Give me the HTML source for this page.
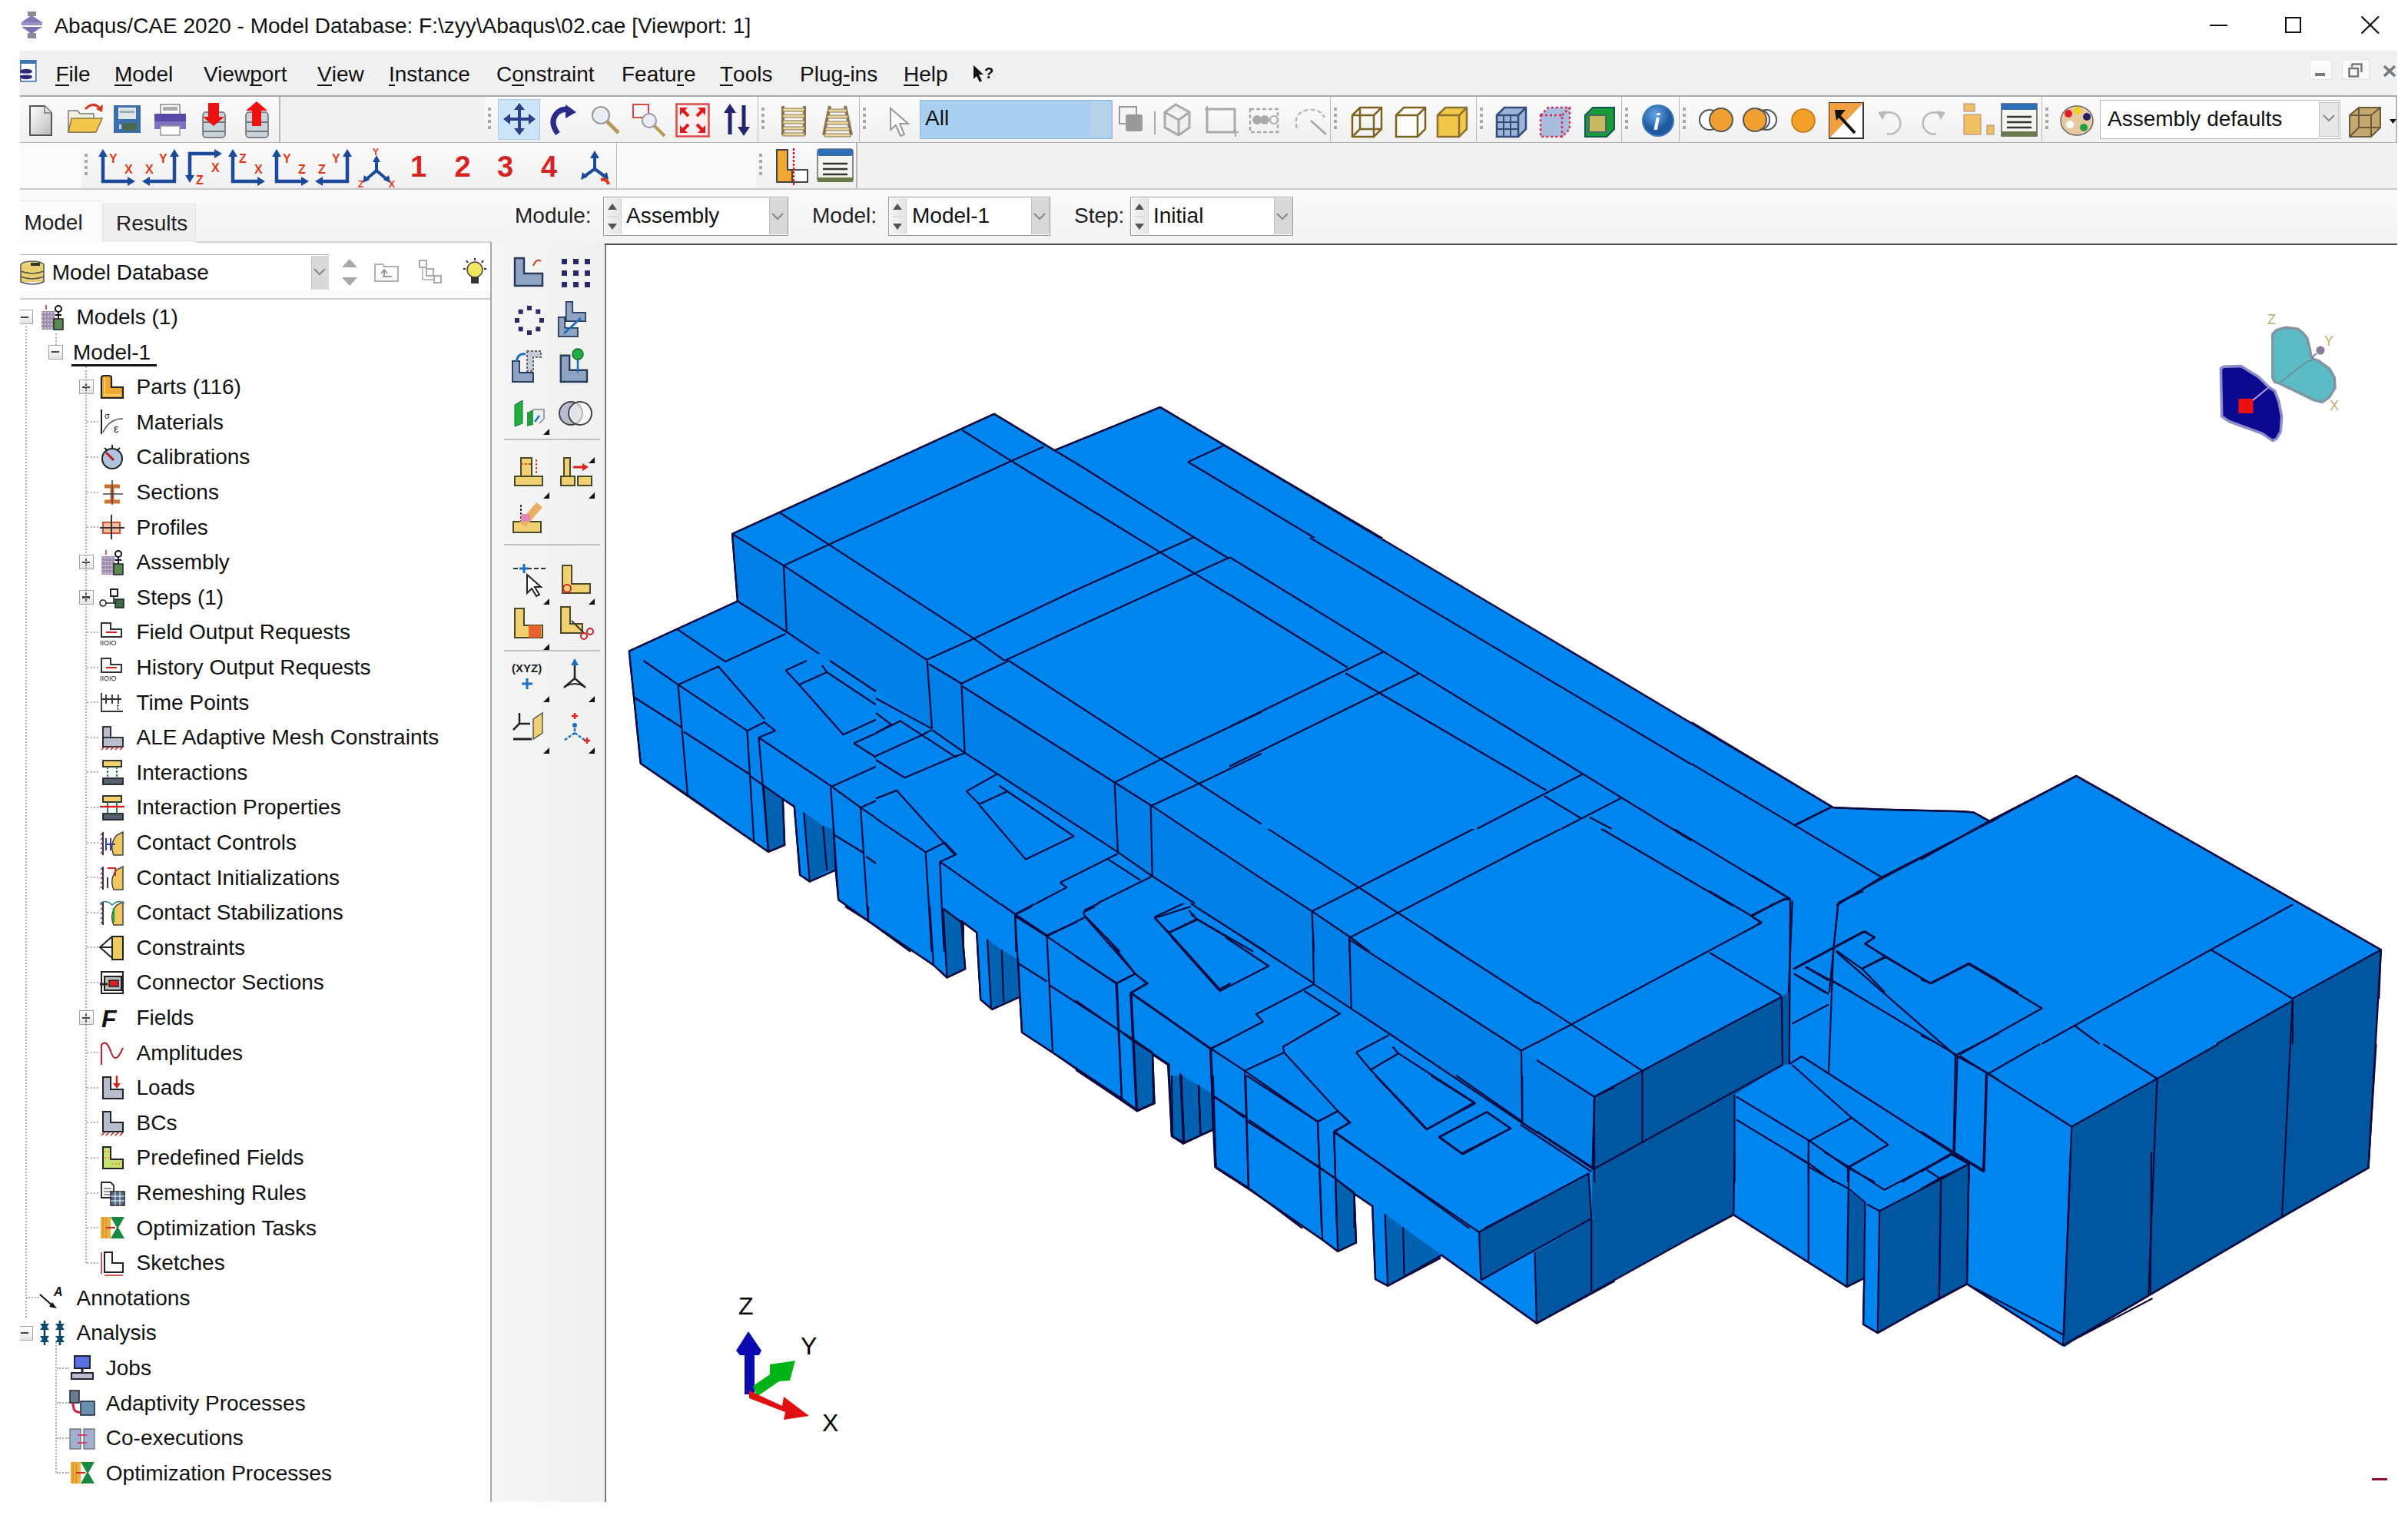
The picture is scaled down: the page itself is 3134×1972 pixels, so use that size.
<!DOCTYPE html>
<html><head><meta charset="utf-8"><title>Abaqus/CAE</title>
<style>
html,body{margin:0;padding:0;background:#fff;}
body{width:3134px;height:1972px;position:relative;overflow:hidden;font-family:"Liberation Sans", sans-serif;}
.t{position:absolute;white-space:nowrap;font-family:"Liberation Sans", sans-serif;}
u{text-decoration:none;border-bottom:2px solid currentColor;display:inline-block;line-height:26px;}
svg text{font-family:"Liberation Sans", sans-serif;}
</style></head><body>
<div class="t" style="left:70.4px;top:19.6px;font-size:28px;line-height:28px;color:#111;font-weight:normal;">Abaqus/CAE 2020 - Model Database: F:\zyy\Abaqus\02.cae [Viewport: 1]</div>
<svg style="position:absolute;left:26px;top:15px;overflow:visible" width="31" height="35" viewBox="0 0 31 35"><rect x="10" y="0" width="11" height="6" fill="#8a8a9a"/>
<polygon points="2,14 15,5 29,14" fill="#8878b8"/><rect x="2" y="14" width="27" height="4" fill="#9a90c8"/>
<polygon points="2,20 29,20 15,29" fill="#7f70b0"/><rect x="10" y="28" width="11" height="7" fill="#8a8a9a"/></svg>
<div style="position:absolute;left:2876px;top:32px;width:23px;height:2px;background:#111"></div>
<div style="position:absolute;left:2974px;top:22px;width:21px;height:21px;border:2px solid #111;box-sizing:border-box"></div>
<svg style="position:absolute;left:3072px;top:20px;overflow:visible" width="26" height="25" viewBox="0 0 26 25"><path d="M1.5 1.5 L24 23.5 M24 1.5 L1.5 23.5" stroke="#111" stroke-width="2.2"/></svg>
<div style="position:absolute;left:26px;top:66px;width:3094px;height:59px;background:#f0f0f0"></div>
<svg style="position:absolute;left:26px;top:78px;overflow:visible" width="22" height="29" viewBox="0 0 22 29"><rect x="0.8" y="0.8" width="20" height="27" fill="#fff" stroke="#3a6fa8" stroke-width="1.6"/>
<rect x="0" y="0" width="21" height="5" fill="#3f74b8"/>
<ellipse cx="8" cy="15" rx="8" ry="3.2" fill="#2e2a7a"/><ellipse cx="8" cy="22" rx="8" ry="3.2" fill="#2e2a7a"/>
<rect x="0" y="17.6" width="16" height="2" fill="#fff"/></svg>
<div class="t" style="left:72.4px;top:82.8px;font-size:28px;line-height:28px;color:#111;font-weight:normal;"><u>F</u>ile</div>
<div class="t" style="left:149px;top:82.8px;font-size:28px;line-height:28px;color:#111;font-weight:normal;"><u>M</u>odel</div>
<div class="t" style="left:265px;top:82.8px;font-size:28px;line-height:28px;color:#111;font-weight:normal;">View<u>p</u>ort</div>
<div class="t" style="left:413px;top:82.8px;font-size:28px;line-height:28px;color:#111;font-weight:normal;"><u>V</u>iew</div>
<div class="t" style="left:506px;top:82.8px;font-size:28px;line-height:28px;color:#111;font-weight:normal;"><u>I</u>nstance</div>
<div class="t" style="left:646px;top:82.8px;font-size:28px;line-height:28px;color:#111;font-weight:normal;">C<u>o</u>nstraint</div>
<div class="t" style="left:809px;top:82.8px;font-size:28px;line-height:28px;color:#111;font-weight:normal;">Featu<u>r</u>e</div>
<div class="t" style="left:937px;top:82.8px;font-size:28px;line-height:28px;color:#111;font-weight:normal;"><u>T</u>ools</div>
<div class="t" style="left:1041px;top:82.8px;font-size:28px;line-height:28px;color:#111;font-weight:normal;">Plug<u>-</u>ins</div>
<div class="t" style="left:1176px;top:82.8px;font-size:28px;line-height:28px;color:#111;font-weight:normal;"><u>H</u>elp</div>
<svg style="position:absolute;left:1266px;top:84px;overflow:visible" width="28" height="24" viewBox="0 0 28 24"><polygon points="1,1 1,19 5,15 9,23 12,21 8,13 14,13" fill="#111"/>
<text x="15" y="18" font-family="Liberation Sans" font-weight="bold" font-size="20" fill="#111">?</text></svg>
<div style="position:absolute;left:3006px;top:77px;width:29px;height:27px;background:#fbfbfb;border:1px solid #e4e4e4;box-sizing:border-box"></div>
<div style="position:absolute;left:3013px;top:95px;width:13px;height:4px;background:#777"></div>
<div style="position:absolute;left:3048px;top:77px;width:36px;height:27px;background:#fbfbfb;border:1px solid #e4e4e4;box-sizing:border-box"></div>
<svg style="position:absolute;left:3056px;top:82px;overflow:visible" width="19" height="19" viewBox="0 0 19 19"><path d="M5 1.5 H17.5 V12 M1.5 7 H13 V17.5 H1.5 Z M5 1.5 V5" stroke="#777" stroke-width="2.5" fill="none"/></svg>
<svg style="position:absolute;left:3101px;top:84px;overflow:visible" width="18" height="17" viewBox="0 0 18 17"><path d="M2 2 L16 15 M16 2 L2 15" stroke="#707880" stroke-width="3.5"/></svg>
<div style="position:absolute;left:26px;top:125px;width:3094px;height:121px;background:#f1f1f1"></div>
<div style="position:absolute;left:26px;top:124px;width:3094px;height:2px;background:#a9a9a9"></div>
<div style="position:absolute;left:26px;top:185px;width:3094px;height:1px;background:#b4b4b4"></div>
<div style="position:absolute;left:26px;top:246px;width:3094px;height:71px;background:linear-gradient(#fafafa,#f3f3f3)"></div>
<div style="position:absolute;left:26px;top:245px;width:3094px;height:1.5px;background:#c8c8c8"></div>
<div style="position:absolute;left:26px;top:126px;width:338px;height:59px;background:linear-gradient(#fbfbfb,#f0f0f0)"></div>
<div style="position:absolute;left:363px;top:126px;width:2px;height:59px;background:#b9b9b9"></div>
<div style="position:absolute;left:631px;top:126px;width:356px;height:59px;background:linear-gradient(#fbfbfb,#f0f0f0)"></div>
<div style="position:absolute;left:986px;top:126px;width:2px;height:59px;background:#b9b9b9"></div>
<div style="position:absolute;left:635px;top:140px;width:4px;height:4px;background:#a8a8a8"></div>
<div style="position:absolute;left:635px;top:148px;width:4px;height:4px;background:#a8a8a8"></div>
<div style="position:absolute;left:635px;top:156px;width:4px;height:4px;background:#a8a8a8"></div>
<div style="position:absolute;left:635px;top:164px;width:4px;height:4px;background:#a8a8a8"></div>
<div style="position:absolute;left:987px;top:126px;width:132px;height:59px;background:linear-gradient(#fbfbfb,#f0f0f0)"></div>
<div style="position:absolute;left:1118px;top:126px;width:2px;height:59px;background:#b9b9b9"></div>
<div style="position:absolute;left:991px;top:140px;width:4px;height:4px;background:#a8a8a8"></div>
<div style="position:absolute;left:991px;top:148px;width:4px;height:4px;background:#a8a8a8"></div>
<div style="position:absolute;left:991px;top:156px;width:4px;height:4px;background:#a8a8a8"></div>
<div style="position:absolute;left:991px;top:164px;width:4px;height:4px;background:#a8a8a8"></div>
<div style="position:absolute;left:1119px;top:126px;width:613px;height:59px;background:linear-gradient(#fbfbfb,#f0f0f0)"></div>
<div style="position:absolute;left:1731px;top:126px;width:2px;height:59px;background:#b9b9b9"></div>
<div style="position:absolute;left:1123px;top:140px;width:4px;height:4px;background:#a8a8a8"></div>
<div style="position:absolute;left:1123px;top:148px;width:4px;height:4px;background:#a8a8a8"></div>
<div style="position:absolute;left:1123px;top:156px;width:4px;height:4px;background:#a8a8a8"></div>
<div style="position:absolute;left:1123px;top:164px;width:4px;height:4px;background:#a8a8a8"></div>
<div style="position:absolute;left:1732px;top:126px;width:190px;height:59px;background:linear-gradient(#fbfbfb,#f0f0f0)"></div>
<div style="position:absolute;left:1921px;top:126px;width:2px;height:59px;background:#b9b9b9"></div>
<div style="position:absolute;left:1736px;top:140px;width:4px;height:4px;background:#a8a8a8"></div>
<div style="position:absolute;left:1736px;top:148px;width:4px;height:4px;background:#a8a8a8"></div>
<div style="position:absolute;left:1736px;top:156px;width:4px;height:4px;background:#a8a8a8"></div>
<div style="position:absolute;left:1736px;top:164px;width:4px;height:4px;background:#a8a8a8"></div>
<div style="position:absolute;left:1922px;top:126px;width:189px;height:59px;background:linear-gradient(#fbfbfb,#f0f0f0)"></div>
<div style="position:absolute;left:2110px;top:126px;width:2px;height:59px;background:#b9b9b9"></div>
<div style="position:absolute;left:1926px;top:140px;width:4px;height:4px;background:#a8a8a8"></div>
<div style="position:absolute;left:1926px;top:148px;width:4px;height:4px;background:#a8a8a8"></div>
<div style="position:absolute;left:1926px;top:156px;width:4px;height:4px;background:#a8a8a8"></div>
<div style="position:absolute;left:1926px;top:164px;width:4px;height:4px;background:#a8a8a8"></div>
<div style="position:absolute;left:2111px;top:126px;width:75px;height:59px;background:linear-gradient(#fbfbfb,#f0f0f0)"></div>
<div style="position:absolute;left:2185px;top:126px;width:2px;height:59px;background:#b9b9b9"></div>
<div style="position:absolute;left:2115px;top:140px;width:4px;height:4px;background:#a8a8a8"></div>
<div style="position:absolute;left:2115px;top:148px;width:4px;height:4px;background:#a8a8a8"></div>
<div style="position:absolute;left:2115px;top:156px;width:4px;height:4px;background:#a8a8a8"></div>
<div style="position:absolute;left:2115px;top:164px;width:4px;height:4px;background:#a8a8a8"></div>
<div style="position:absolute;left:2186px;top:126px;width:472px;height:59px;background:linear-gradient(#fbfbfb,#f0f0f0)"></div>
<div style="position:absolute;left:2657px;top:126px;width:2px;height:59px;background:#b9b9b9"></div>
<div style="position:absolute;left:2190px;top:140px;width:4px;height:4px;background:#a8a8a8"></div>
<div style="position:absolute;left:2190px;top:148px;width:4px;height:4px;background:#a8a8a8"></div>
<div style="position:absolute;left:2190px;top:156px;width:4px;height:4px;background:#a8a8a8"></div>
<div style="position:absolute;left:2190px;top:164px;width:4px;height:4px;background:#a8a8a8"></div>
<div style="position:absolute;left:2658px;top:126px;width:461px;height:59px;background:linear-gradient(#fbfbfb,#f0f0f0)"></div>
<div style="position:absolute;left:3118px;top:126px;width:2px;height:59px;background:#b9b9b9"></div>
<div style="position:absolute;left:2662px;top:140px;width:4px;height:4px;background:#a8a8a8"></div>
<div style="position:absolute;left:2662px;top:148px;width:4px;height:4px;background:#a8a8a8"></div>
<div style="position:absolute;left:2662px;top:156px;width:4px;height:4px;background:#a8a8a8"></div>
<div style="position:absolute;left:2662px;top:164px;width:4px;height:4px;background:#a8a8a8"></div>
<div style="position:absolute;left:26px;top:186px;width:80px;height:59px;background:#fbfbfb"></div>
<div style="position:absolute;left:106px;top:186px;width:697px;height:59px;background:linear-gradient(#fbfbfb,#f0f0f0)"></div>
<div style="position:absolute;left:802px;top:186px;width:2px;height:59px;background:#b9b9b9"></div>
<div style="position:absolute;left:110px;top:200px;width:4px;height:4px;background:#a8a8a8"></div>
<div style="position:absolute;left:110px;top:208px;width:4px;height:4px;background:#a8a8a8"></div>
<div style="position:absolute;left:110px;top:216px;width:4px;height:4px;background:#a8a8a8"></div>
<div style="position:absolute;left:110px;top:224px;width:4px;height:4px;background:#a8a8a8"></div>
<div style="position:absolute;left:984px;top:186px;width:131px;height:59px;background:linear-gradient(#fbfbfb,#f0f0f0)"></div>
<div style="position:absolute;left:1114px;top:186px;width:2px;height:59px;background:#b9b9b9"></div>
<div style="position:absolute;left:988px;top:200px;width:4px;height:4px;background:#a8a8a8"></div>
<div style="position:absolute;left:988px;top:208px;width:4px;height:4px;background:#a8a8a8"></div>
<div style="position:absolute;left:988px;top:216px;width:4px;height:4px;background:#a8a8a8"></div>
<div style="position:absolute;left:988px;top:224px;width:4px;height:4px;background:#a8a8a8"></div>
<div style="position:absolute;left:803px;top:186px;width:181px;height:59px;background:#fafafa"></div>
<svg style="position:absolute;left:37px;top:136px;overflow:visible" width="32" height="42" viewBox="0 0 32 42"><path d="M2 2 H21 L30 11 V40 H2 Z" fill="url(#gdoc)" stroke="#555" stroke-width="2"/><path d="M21 2 V11 H30" fill="#ddd" stroke="#777" stroke-width="1.5"/><defs><linearGradient id="gdoc" x1="0" y1="0" x2="1" y2="1"><stop offset="0" stop-color="#fff"/><stop offset="1" stop-color="#bbb"/></linearGradient></defs></svg>
<svg style="position:absolute;left:87px;top:132px;overflow:visible" width="48" height="42" viewBox="0 0 48 42"><path d="M2 12 H14 L17 16 H35 V40 H2 Z" fill="#f3f0e0" stroke="#777" stroke-width="1.5"/><path d="M6 22 H46 L38 40 H2 Z" fill="#f2c74a" stroke="#8a7a40" stroke-width="1.5"/><path d="M24 10 Q34 0 42 8" stroke="#d23a20" stroke-width="3" fill="none"/><polygon points="38,10 47,4 46,14" fill="#d23a20"/></svg>
<svg style="position:absolute;left:148px;top:137px;overflow:visible" width="35" height="37" viewBox="0 0 35 37"><rect x="0" y="0" width="35" height="36" fill="#3c6fae"/><rect x="6" y="3" width="23" height="15" fill="#dfe6e9"/><rect x="8" y="7" width="19" height="3" fill="#9aa"/><rect x="12" y="23" width="18" height="10" fill="#4a6a50"/><rect x="7" y="25" width="3" height="6" fill="#ccc"/></svg>
<svg style="position:absolute;left:200px;top:135px;overflow:visible" width="43" height="43" viewBox="0 0 43 43"><rect x="9" y="1" width="25" height="13" fill="#fff" stroke="#888" stroke-width="1.5"/><rect x="12" y="4" width="19" height="5" fill="#aaa"/><rect x="1" y="13" width="41" height="20" fill="#5a4aa8"/><rect x="1" y="23" width="41" height="10" fill="#8070c0"/><rect x="9" y="29" width="25" height="12" fill="#fff" stroke="#999" stroke-width="1.5"/></svg>
<svg style="position:absolute;left:263px;top:132px;overflow:visible" width="31" height="48" viewBox="0 0 31 48"><rect x="1" y="14" width="29" height="33" rx="4" fill="#c8d4dc" stroke="#666" stroke-width="1.5"/><rect x="1" y="26" width="29" height="2" fill="#777"/><rect x="1" y="38" width="29" height="2" fill="#777"/><polygon points="8,2 22,2 22,20 29,20 15,32 1,20 8,20" fill="#ee1111"/></svg>
<svg style="position:absolute;left:319px;top:132px;overflow:visible" width="31" height="48" viewBox="0 0 31 48"><rect x="1" y="14" width="29" height="33" rx="4" fill="#c8d4dc" stroke="#666" stroke-width="1.5"/><rect x="1" y="26" width="29" height="2" fill="#777"/><rect x="1" y="38" width="29" height="2" fill="#777"/><polygon points="15,0 29,12 21,12 21,32 9,32 9,12 1,12" fill="#ee1111"/></svg>
<div style="position:absolute;left:648px;top:129px;width:55px;height:53px;background:#cce4f7;border:1px solid #a6cdee;box-sizing:border-box"></div>
<svg style="position:absolute;left:655px;top:134px;overflow:visible" width="42" height="42" viewBox="0 0 42 42"><path d="M21 3 V39 M3 21 H39" stroke="#2a3f88" stroke-width="4"/><polygon points="21,0 14,9 28,9" fill="#2a3f88"/><polygon points="21,42 14,33 28,33" fill="#2a3f88"/><polygon points="0,21 9,14 9,28" fill="#2a3f88"/><polygon points="42,21 33,14 33,28" fill="#2a3f88"/></svg>
<svg style="position:absolute;left:712px;top:136px;overflow:visible" width="38" height="40" viewBox="0 0 38 40"><path d="M14 38 Q2 22 14 10 Q22 4 30 8" stroke="#2a2a88" stroke-width="7" fill="none"/><polygon points="24,0 38,10 24,18" fill="#2a2a88"/></svg>
<svg style="position:absolute;left:768px;top:136px;overflow:visible" width="40" height="40" viewBox="0 0 40 40"><line x1="20" y1="20" x2="37" y2="37" stroke="#b89a5a" stroke-width="5"/><circle cx="14" cy="14" r="11" fill="#e8eef3" stroke="#999" stroke-width="2"/></svg>
<svg style="position:absolute;left:822px;top:134px;overflow:visible" width="46" height="46" viewBox="0 0 46 46"><rect x="2" y="2" width="20" height="17" fill="none" stroke="#dd4444" stroke-width="2"/><line x1="28" y1="28" x2="43" y2="43" stroke="#b89a5a" stroke-width="4"/><circle cx="23" cy="23" r="9" fill="#e8eef3" stroke="#999" stroke-width="2"/></svg>
<svg style="position:absolute;left:879px;top:134px;overflow:visible" width="45" height="45" viewBox="0 0 45 45"><rect x="1.5" y="1.5" width="42" height="42" fill="#fdf0f0" stroke="#e04848" stroke-width="2.5"/><path d="M8 8 L17 17 M37 8 L28 17 M8 37 L17 28 M37 37 L28 28" stroke="#e01818" stroke-width="4"/><polygon points="6,6 16,6 6,16" fill="#e01818"/><polygon points="39,6 29,6 39,16" fill="#e01818"/><polygon points="6,39 16,39 6,29" fill="#e01818"/><polygon points="39,39 29,39 39,29" fill="#e01818"/></svg>
<svg style="position:absolute;left:940px;top:135px;overflow:visible" width="38" height="42" viewBox="0 0 38 42"><path d="M10 40 V8 M28 2 V34" stroke="#25256e" stroke-width="5"/><polygon points="10,0 2,12 18,12" fill="#25256e"/><polygon points="28,42 20,30 36,30" fill="#25256e"/></svg>
<svg style="position:absolute;left:1013px;top:136px;overflow:visible" width="40" height="42" viewBox="0 0 40 42"><path d="M6 2 V40 M34 2 V40" stroke="#8a7450" stroke-width="4"/><rect x="6" y="5" width="28" height="4" fill="#e8d8a0" stroke="#8a7450" stroke-width="1"/><rect x="6" y="13" width="28" height="4" fill="#e8d8a0" stroke="#8a7450" stroke-width="1"/><rect x="6" y="21" width="28" height="4" fill="#e8d8a0" stroke="#8a7450" stroke-width="1"/><rect x="6" y="29" width="28" height="4" fill="#e8d8a0" stroke="#8a7450" stroke-width="1"/><rect x="6" y="37" width="28" height="4" fill="#e8d8a0" stroke="#8a7450" stroke-width="1"/></svg>
<svg style="position:absolute;left:1070px;top:136px;overflow:visible" width="40" height="42" viewBox="0 0 40 42"><path d="M10 2 L2 40 M30 2 L38 40" stroke="#8a7450" stroke-width="4"/><rect x="8.0" y="6" width="24.0" height="4" fill="#e8d8a0" stroke="#8a7450" stroke-width="1"/><rect x="6.8" y="14" width="26.4" height="4" fill="#e8d8a0" stroke="#8a7450" stroke-width="1"/><rect x="5.6" y="22" width="28.8" height="4" fill="#e8d8a0" stroke="#8a7450" stroke-width="1"/><rect x="4.4" y="30" width="31.2" height="4" fill="#e8d8a0" stroke="#8a7450" stroke-width="1"/><rect x="3.2" y="38" width="33.6" height="4" fill="#e8d8a0" stroke="#8a7450" stroke-width="1"/></svg>
<svg style="position:absolute;left:1157px;top:139px;overflow:visible" width="30" height="40" viewBox="0 0 30 40"><polygon points="2,2 2,30 9,24 15,38 20,36 14,22 25,22" fill="#fafafa" stroke="#999" stroke-width="2"/></svg>
<div style="position:absolute;left:1197px;top:130px;width:251px;height:51px;background:#a9d0f1;border:1.5px solid #93b8d8;box-sizing:border-box"></div>
<div style="position:absolute;left:1420px;top:133px;width:25px;height:45px;background:#b7d3ea"></div>
<div class="t" style="left:1204px;top:140.3px;font-size:28px;line-height:28px;color:#111;font-weight:normal;">All</div>
<svg style="position:absolute;left:1455px;top:137px;overflow:visible" width="34" height="42" viewBox="0 0 34 42"><rect x="2" y="2" width="22" height="22" fill="#f4f4f4" stroke="#999" stroke-width="2"/><rect x="10" y="12" width="22" height="22" rx="3" fill="#999"/></svg>
<div style="position:absolute;left:1502px;top:145px;width:2px;height:30px;background:#aaa"></div>
<svg style="position:absolute;left:1512px;top:134px;overflow:visible" width="48" height="46" viewBox="0 0 48 46"><path d="M4 12 L18 2 L36 12 L36 32 L22 42 L4 32 Z M4 12 L22 22 L36 12 M22 22 V42" stroke="#aaa" stroke-width="3" fill="#f0f0f0"/></svg>
<svg style="position:absolute;left:1566px;top:136px;overflow:visible" width="48" height="44" viewBox="0 0 48 44"><rect x="5" y="6" width="36" height="30" fill="none" stroke="#aaa" stroke-width="3"/><path d="M2 6 H10 M5 2 V10 M38 36 H46 M42 32 V42" stroke="#aaa" stroke-width="2"/></svg>
<svg style="position:absolute;left:1622px;top:136px;overflow:visible" width="48" height="44" viewBox="0 0 48 44"><rect x="5" y="6" width="36" height="30" fill="none" stroke="#aaa" stroke-width="2.5" stroke-dasharray="5 3"/><circle cx="14" cy="20" r="6" fill="#aaa"/><circle cx="24" cy="20" r="6" fill="#aaa"/><circle cx="36" cy="20" r="5" fill="none" stroke="#aaa" stroke-width="2"/></svg>
<svg style="position:absolute;left:1682px;top:137px;overflow:visible" width="48" height="42" viewBox="0 0 48 42"><path d="M6 30 Q0 10 20 6 Q36 4 42 16" stroke="#bbb" stroke-width="2.5" fill="none" stroke-dasharray="6 3"/><path d="M24 20 L44 38" stroke="#aaa" stroke-width="3"/></svg>
<svg style="position:absolute;left:1756px;top:136px;overflow:visible" width="46" height="46" viewBox="0 0 46 46"><polygon points="4,14 14,4 42,4 42,32 32,42 4,42" fill="none" stroke="#7a6420" stroke-width="2.5" /><path d="M4 14 H32 V42 M32 14 L42 4" stroke="#7a6420" stroke-width="2.5" fill="none" /><path d="M14 4 V32 H42 M14 32 L4 42" stroke="#7a6420" stroke-width="2.5" fill="none"/></svg>
<svg style="position:absolute;left:1813px;top:136px;overflow:visible" width="46" height="46" viewBox="0 0 46 46"><polygon points="4,14 14,4 42,4 42,32 32,42 4,42" fill="#fbfbfb" stroke="#7a6420" stroke-width="2.5" /><path d="M4 14 H32 V42 M32 14 L42 4" stroke="#7a6420" stroke-width="2.5" fill="none" /></svg>
<svg style="position:absolute;left:1867px;top:136px;overflow:visible" width="46" height="46" viewBox="0 0 46 46"><polygon points="4,14 14,4 42,4 42,32 32,42 4,42" fill="#f1c84a" stroke="#8a7030" stroke-width="2.5" /><path d="M4 14 H32 V42 M32 14 L42 4" stroke="#8a7030" stroke-width="2.5" fill="none" /></svg>
<svg style="position:absolute;left:1944px;top:136px;overflow:visible" width="46" height="46" viewBox="0 0 46 46"><polygon points="4,14 14,4 42,4 42,32 32,42 4,42" fill="#9ab4d8" stroke="#334a7a" stroke-width="2.5" /><path d="M4 14 H32 V42 M32 14 L42 4" stroke="#334a7a" stroke-width="2.5" fill="none" /><path d="M4 23 H32 M4 32 H32 M13 14 V42 M22 14 V42" stroke="#334a7a" stroke-width="2"/></svg>
<svg style="position:absolute;left:2001px;top:136px;overflow:visible" width="46" height="46" viewBox="0 0 46 46"><polygon points="4,14 14,4 42,4 42,32 32,42 4,42" fill="#a8bde0" stroke="#d03050" stroke-width="2.5" stroke-dasharray="3 3"/><path d="M4 14 H32 V42 M32 14 L42 4" stroke="#d03050" stroke-width="2.5" fill="none" stroke-dasharray="3 3"/></svg>
<svg style="position:absolute;left:2059px;top:136px;overflow:visible" width="46" height="46" viewBox="0 0 46 46"><polygon points="4,14 14,4 42,4 42,32 32,42 4,42" fill="#1a9a3a" stroke="#155" stroke-width="2"/><rect x="9" y="14" width="22" height="22" fill="#c8b860" stroke="#466" stroke-width="2"/></svg>
<svg style="position:absolute;left:2136px;top:135px;overflow:visible" width="44" height="44" viewBox="0 0 44 44"><circle cx="22" cy="22" r="21" fill="#3a78c0"/><circle cx="22" cy="22" r="19" fill="url(#ginfo)"/><defs><radialGradient id="ginfo" cx="0.4" cy="0.3"><stop offset="0" stop-color="#6aa8e8"/><stop offset="1" stop-color="#1f5aa0"/></radialGradient></defs><text x="16" y="34" font-family="Liberation Serif" font-style="italic" font-weight="bold" font-size="30" fill="#fff">i</text></svg>
<svg style="position:absolute;left:2210px;top:136px;overflow:visible" width="48" height="40" viewBox="0 0 48 40"><circle cx="15" cy="20" r="13" fill="#fff" stroke="#555" stroke-width="2"/><circle cx="30" cy="20" r="15" fill="#f0a030" stroke="#555" stroke-width="2"/></svg>
<svg style="position:absolute;left:2266px;top:136px;overflow:visible" width="48" height="40" viewBox="0 0 48 40"><circle cx="33" cy="20" r="13" fill="#fff" stroke="#555" stroke-width="2"/><circle cx="18" cy="20" r="15" fill="#f0a030" stroke="#555" stroke-width="2"/><path d="M24 7 A13 13 0 0 1 24 33" stroke="#555" stroke-width="2" fill="none"/></svg>
<svg style="position:absolute;left:2330px;top:140px;overflow:visible" width="34" height="34" viewBox="0 0 34 34"><circle cx="17" cy="17" r="15" fill="#f2a028" stroke="#c07010" stroke-width="1.5"/></svg>
<svg style="position:absolute;left:2380px;top:133px;overflow:visible" width="46" height="48" viewBox="0 0 46 48"><rect x="1" y="1" width="44" height="46" fill="#fff" stroke="#333" stroke-width="2"/><polygon points="1,1 45,1 1,47" fill="#f0a040"/><path d="M12 16 L34 40" stroke="#111" stroke-width="4"/><polygon points="8,10 22,10 10,24" fill="#111"/></svg>
<svg style="position:absolute;left:2440px;top:138px;overflow:visible" width="40" height="40" viewBox="0 0 40 40"><path d="M10 12 A14 14 0 1 1 16 36" stroke="#bbb" stroke-width="2.5" fill="none"/><polygon points="4,8 16,6 10,18" fill="#bbb"/></svg>
<svg style="position:absolute;left:2496px;top:138px;overflow:visible" width="40" height="40" viewBox="0 0 40 40"><path d="M30 12 A14 14 0 1 0 24 36" stroke="#bbb" stroke-width="2.5" fill="none"/><polygon points="36,8 24,6 30,18" fill="#bbb"/></svg>
<svg style="position:absolute;left:2550px;top:133px;overflow:visible" width="48" height="44" viewBox="0 0 48 44"><rect x="6" y="2" width="14" height="10" fill="#f0c060" stroke="#a88" stroke-width="1"/><rect x="6" y="16" width="22" height="26" fill="#f0c060" stroke="#a88" stroke-width="1"/><rect x="36" y="30" width="9" height="12" fill="#f0c060" stroke="#a88" stroke-width="1"/></svg>
<svg style="position:absolute;left:2604px;top:134px;overflow:visible" width="48" height="44" viewBox="0 0 48 44"><rect x="1" y="1" width="46" height="42" fill="#f4f4f0" stroke="#555" stroke-width="1.5"/><rect x="1" y="1" width="46" height="8" fill="#2e6fb8"/><path d="M8 18 H40 M8 25 H40 M8 32 H40" stroke="#333" stroke-width="2.5"/><rect x="1" y="37" width="46" height="6" fill="#6a7a4a"/></svg>
<svg style="position:absolute;left:2680px;top:134px;overflow:visible" width="46" height="46" viewBox="0 0 46 46"><ellipse cx="23" cy="23" rx="21" ry="19" fill="#e8c8a0" stroke="#666" stroke-width="1.5"/><circle cx="12" cy="14" r="5" fill="#e02020"/><circle cx="24" cy="10" r="5" fill="#f0d020"/><circle cx="36" cy="18" r="5" fill="#202060"/><circle cx="32" cy="32" r="5" fill="#20a040"/><circle cx="14" cy="28" r="5" fill="#fff"/></svg>
<div style="position:absolute;left:2733px;top:130px;width:313px;height:51px;background:#fff;border:1.5px solid #b8b8b8;box-sizing:border-box"></div>
<div style="position:absolute;left:3018px;top:133px;width:26px;height:45px;background:#e8e8e8;border:1px solid #c4c4c4;box-sizing:border-box"></div>
<svg style="position:absolute;left:3022px;top:148px;overflow:visible" width="18" height="12" viewBox="0 0 18 12"><path d="M2 2 L9 9 L16 2" stroke="#888" stroke-width="2" fill="none"/></svg>
<div class="t" style="left:2743px;top:141.1px;font-size:28px;line-height:28px;color:#111;font-weight:normal;">Assembly defaults</div>
<svg style="position:absolute;left:3054px;top:136px;overflow:visible" width="48" height="44" viewBox="0 0 48 44"><polygon points="4,14 16,4 44,4 44,30 32,42 4,42" fill="#c4a870" stroke="#6a5a3a" stroke-width="2"/><path d="M4 14 H32 V42 M32 14 L44 4 M16 4 V30 H44 M16 30 L4 42" stroke="#6a5a3a" stroke-width="2" fill="none"/></svg>
<svg style="position:absolute;left:3110px;top:155px;overflow:visible" width="9" height="8" viewBox="0 0 9 8"><polygon points="0,0 9,0 4.5,6" fill="#111"/></svg>
<svg style="position:absolute;left:128px;top:194px;overflow:visible" width="48" height="48" viewBox="0 0 48 48"><path d="M6 8 V42 H42" stroke="#1c4a9a" stroke-width="4.5" fill="none"/><polygon points="6,0 0,10 12,10" fill="#1c4a9a"/><polygon points="48,42 38,36 38,48" fill="#1c4a9a"/><text x="14" y="18" font-size="16" font-weight="bold" font-family="Liberation Sans" fill="#d83a1a">Y</text><text x="34" y="32" font-size="16" font-weight="bold" font-family="Liberation Sans" fill="#d83a1a">X</text></svg>
<svg style="position:absolute;left:184.5px;top:194px;overflow:visible" width="48" height="48" viewBox="0 0 48 48"><path d="M42 8 V42 H6" stroke="#1c4a9a" stroke-width="4.5" fill="none"/><polygon points="42,0 36,10 48,10" fill="#1c4a9a"/><polygon points="0,42 10,36 10,48" fill="#1c4a9a"/><text x="22" y="18" font-size="16" font-weight="bold" font-family="Liberation Sans" fill="#d83a1a">Y</text><text x="4" y="32" font-size="16" font-weight="bold" font-family="Liberation Sans" fill="#d83a1a">X</text></svg>
<svg style="position:absolute;left:241px;top:194px;overflow:visible" width="48" height="48" viewBox="0 0 48 48"><path d="M6 36 V6 H40" stroke="#1c4a9a" stroke-width="4.5" fill="none"/><polygon points="6,44 0,34 12,34" fill="#1c4a9a"/><polygon points="48,6 38,0 38,12" fill="#1c4a9a"/><text x="14" y="46" font-size="16" font-weight="bold" font-family="Liberation Sans" fill="#d83a1a">Z</text><text x="34" y="30" font-size="16" font-weight="bold" font-family="Liberation Sans" fill="#d83a1a">X</text></svg>
<svg style="position:absolute;left:297px;top:194px;overflow:visible" width="48" height="48" viewBox="0 0 48 48"><path d="M6 8 V42 H42" stroke="#1c4a9a" stroke-width="4.5" fill="none"/><polygon points="6,0 0,10 12,10" fill="#1c4a9a"/><polygon points="48,42 38,36 38,48" fill="#1c4a9a"/><text x="14" y="18" font-size="16" font-weight="bold" font-family="Liberation Sans" fill="#d83a1a">Z</text><text x="34" y="32" font-size="16" font-weight="bold" font-family="Liberation Sans" fill="#d83a1a">X</text></svg>
<svg style="position:absolute;left:353.5px;top:194px;overflow:visible" width="48" height="48" viewBox="0 0 48 48"><path d="M6 8 V42 H42" stroke="#1c4a9a" stroke-width="4.5" fill="none"/><polygon points="6,0 0,10 12,10" fill="#1c4a9a"/><polygon points="48,42 38,36 38,48" fill="#1c4a9a"/><text x="14" y="18" font-size="16" font-weight="bold" font-family="Liberation Sans" fill="#d83a1a">Y</text><text x="34" y="32" font-size="16" font-weight="bold" font-family="Liberation Sans" fill="#d83a1a">Z</text></svg>
<svg style="position:absolute;left:410px;top:194px;overflow:visible" width="48" height="48" viewBox="0 0 48 48"><path d="M42 8 V42 H6" stroke="#1c4a9a" stroke-width="4.5" fill="none"/><polygon points="42,0 36,10 48,10" fill="#1c4a9a"/><polygon points="0,42 10,36 10,48" fill="#1c4a9a"/><text x="22" y="18" font-size="16" font-weight="bold" font-family="Liberation Sans" fill="#d83a1a">Y</text><text x="4" y="32" font-size="16" font-weight="bold" font-family="Liberation Sans" fill="#d83a1a">Z</text></svg>
<svg style="position:absolute;left:466px;top:194px;overflow:visible" width="48" height="48" viewBox="0 0 48 48"><path d="M24 14 V28 L10 40 M24 28 L38 40" stroke="#1c4a9a" stroke-width="4" fill="none"/><polygon points="24,8 19,17 29,17" fill="#1c4a9a"/><polygon points="6,44 8,34 15,40" fill="#1c4a9a"/><polygon points="42,44 40,34 33,40" fill="#1c4a9a"/><text x="19" y="8" font-size="12" font-weight="bold" font-family="Liberation Sans" fill="#d83a1a">Y</text><text x="0" y="50" font-size="12" font-weight="bold" font-family="Liberation Sans" fill="#d83a1a">Z</text><text x="40" y="50" font-size="12" font-weight="bold" font-family="Liberation Sans" fill="#d83a1a">X</text></svg>
<div class="t" style="left:534px;top:198px;font-size:38px;line-height:38px;font-weight:bold;color:#d42424">1</div>
<div class="t" style="left:591.5px;top:198px;font-size:38px;line-height:38px;font-weight:bold;color:#d42424">2</div>
<div class="t" style="left:647px;top:198px;font-size:38px;line-height:38px;font-weight:bold;color:#d42424">3</div>
<div class="t" style="left:704px;top:198px;font-size:38px;line-height:38px;font-weight:bold;color:#d42424">4</div>
<svg style="position:absolute;left:750px;top:194px;overflow:visible" width="48" height="48" viewBox="0 0 48 48"><path d="M24 10 V26 L10 36 M24 26 L38 36" stroke="#1c4a9a" stroke-width="4" fill="none"/><polygon points="24,2 18,12 30,12" fill="#1c4a9a"/><polygon points="6,40 8,30 15,36" fill="#1c4a9a"/><polygon points="42,40 40,30 33,36" fill="#1c4a9a"/><path d="M32 40 Q40 38 42 46" stroke="#d83a1a" stroke-width="4" fill="none"/></svg>
<svg style="position:absolute;left:1007px;top:193px;overflow:visible" width="48" height="50" viewBox="0 0 48 50"><path d="M4 2 H18 V28 H36 V44 H4 Z" fill="#f0a830" stroke="#444" stroke-width="2"/><rect x="24" y="28" width="20" height="16" fill="#fff" stroke="#444" stroke-width="2"/><path d="M26 0 V50" stroke="#d02020" stroke-width="2.5" stroke-dasharray="3 2"/></svg>
<svg style="position:absolute;left:1063px;top:193px;overflow:visible" width="48" height="46" viewBox="0 0 48 46"><rect x="1" y="1" width="46" height="42" rx="3" fill="#f4f4f0" stroke="#666" stroke-width="1.5"/><rect x="1" y="1" width="46" height="9" rx="3" fill="#2e6fb8"/><path d="M8 20 H40 M8 27 H40 M8 34 H40" stroke="#333" stroke-width="2.5"/><rect x="1" y="38" width="46" height="6" fill="#6a7a4a"/></svg>
<div style="position:absolute;left:26px;top:261px;width:107px;height:55px;background:#fbfbfb;border-top:1px solid #e6e6e6"></div>
<div style="position:absolute;left:133px;top:265px;width:122px;height:49px;background:#efefef;border:1px solid #e2e2e2;box-sizing:border-box"></div>
<div class="t" style="left:31.4px;top:275.8px;font-size:28px;line-height:28px;color:#222;font-weight:normal;">Model</div>
<div class="t" style="left:151px;top:277.3px;font-size:28px;line-height:28px;color:#222;font-weight:normal;">Results</div>
<div style="position:absolute;left:26px;top:315px;width:613px;height:1640px;background:#fff"></div>
<div style="position:absolute;left:255px;top:314px;width:384px;height:1.5px;background:#d4d4d4"></div>
<div style="position:absolute;left:638px;top:315px;width:2px;height:1640px;background:#a8a8a8"></div>
<div style="position:absolute;left:26px;top:331px;width:402px;height:48px;background:#fff;border:1.5px solid #b0b0b0;border-left:none;box-sizing:border-box"></div>
<div style="position:absolute;left:405px;top:333px;width:22px;height:44px;background:#d9d9d9;border-left:1px solid #c4c4c4"></div>
<svg style="position:absolute;left:408px;top:348px;overflow:visible" width="16" height="12" viewBox="0 0 16 12"><path d="M1 2 L8 9 L15 2" stroke="#888" stroke-width="2" fill="none"/></svg>
<div style="position:absolute;left:26px;top:378px;width:612px;height:11px;background:#fafafa"></div>
<div style="position:absolute;left:26px;top:388px;width:612px;height:1.5px;background:#cfcfcf"></div>
<svg style="position:absolute;left:26px;top:339px;overflow:visible" width="32" height="33" viewBox="0 0 32 33"><ellipse cx="16" cy="6" rx="15" ry="5" fill="#e8d878" stroke="#555" stroke-width="1.5"/><rect x="1" y="6" width="30" height="22" fill="#e8d070"/><path d="M1 14 Q16 20 31 14 M1 21 Q16 27 31 21 M1 28 Q16 34 31 28" stroke="#555" stroke-width="1.5" fill="none"/><path d="M1 6 V28 M31 6 V28" stroke="#555" stroke-width="1.5"/><rect x="14" y="3" width="12" height="4" fill="#333"/></svg>
<div class="t" style="left:67.8px;top:340.6px;font-size:28px;line-height:28px;color:#111;font-weight:normal;">Model Database</div>
<svg style="position:absolute;left:444px;top:336px;overflow:visible" width="22" height="37" viewBox="0 0 22 37"><polygon points="11,1 21,12 1,12" fill="#a8a8a8"/><polygon points="11,36 21,25 1,25" fill="#a8a8a8"/></svg>
<svg style="position:absolute;left:486px;top:338px;overflow:visible" width="34" height="30" viewBox="0 0 34 30"><path d="M2 6 H12 L14 9 H32 V28 H2 Z" fill="none" stroke="#b0b0b0" stroke-width="2"/><path d="M12 22 H24 M14 14 V22 M10 18 L14 13 L18 18" stroke="#999" stroke-width="2" fill="none"/></svg>
<svg style="position:absolute;left:545px;top:338px;overflow:visible" width="31" height="32" viewBox="0 0 31 32"><rect x="1" y="1" width="9" height="9" fill="none" stroke="#aaa" stroke-width="2"/><rect x="10" y="12" width="9" height="9" fill="none" stroke="#aaa" stroke-width="2"/><rect x="20" y="21" width="9" height="9" fill="none" stroke="#aaa" stroke-width="2"/><path d="M5 10 V26 H20" stroke="#aaa" stroke-width="1.5" fill="none"/></svg>
<svg style="position:absolute;left:601px;top:336px;overflow:visible" width="34" height="36" viewBox="0 0 34 36"><circle cx="17" cy="15" r="10" fill="#f2e860" stroke="#444" stroke-width="1.5"/><rect x="12" y="24" width="10" height="9" fill="#333"/><path d="M2 14 H5 M29 14 H32 M6 3 L8 6 M28 3 L26 6 M17 0 V3" stroke="#333" stroke-width="2"/></svg>
<div class="t" style="left:99.5px;top:398.9px;font-size:28px;line-height:28px;color:#111;font-weight:normal;">Models (1)</div>
<svg style="position:absolute;left:52px;top:396.6px;overflow:visible" width="33" height="33" viewBox="0 0 33 33"><path d="M8 0 V6" stroke="#c02040" stroke-width="1.5"/><rect x="2" y="8" width="18" height="24" fill="#a090b0"/><path d="M2 10 H20" stroke="#fff" stroke-width="1.2" stroke-dasharray="2 2"/><path d="M2 15 H20" stroke="#fff" stroke-width="1.2" stroke-dasharray="2 2"/><path d="M2 20 H20" stroke="#fff" stroke-width="1.2" stroke-dasharray="2 2"/><path d="M2 25 H20" stroke="#fff" stroke-width="1.2" stroke-dasharray="2 2"/><path d="M2 30 H20" stroke="#fff" stroke-width="1.2" stroke-dasharray="2 2"/><rect x="18" y="18" width="12" height="14" fill="#5a8a50" stroke="#222" stroke-width="1.5"/><circle cx="24" cy="5" r="4" fill="#fff" stroke="#111" stroke-width="2"/><path d="M24 9 V18 M20 13 H28" stroke="#111" stroke-width="2"/></svg>
<div style="position:absolute;left:26px;top:403.1px;width:17px;height:19px;border:1.5px solid #a4a4a4;border-left:none;box-sizing:border-box;background:linear-gradient(#fff,#e4e4e4)"></div>
<div style="position:absolute;left:27px;top:411.6px;width:10px;height:2.2px;background:#444"></div>
<div class="t" style="left:95px;top:444.5px;font-size:28px;line-height:28px;color:#111;font-weight:normal;">Model-1</div>
<div style="position:absolute;left:63px;top:448.70000000000005px;width:19px;height:19px;border:1.5px solid #a4a4a4;box-sizing:border-box;background:linear-gradient(#fff,#e4e4e4)"></div>
<div style="position:absolute;left:67px;top:457.20000000000005px;width:10px;height:2.2px;background:#444"></div>
<div class="t" style="left:177.5px;top:490.1px;font-size:28px;line-height:28px;color:#111;font-weight:normal;">Parts (116)</div>
<svg style="position:absolute;left:130px;top:487.80000000000007px;overflow:visible" width="33" height="33" viewBox="0 0 33 33"><path d="M2 4 Q2 1 6 1 H12 Q15 1 15 4 V16 H30 V30 H2 Z" fill="#f0a830" stroke="#222" stroke-width="2.2"/><path d="M6 4 V26 H28" stroke="#ffd070" stroke-width="2" fill="none"/></svg>
<div style="position:absolute;left:102.5px;top:494.30000000000007px;width:19px;height:19px;border:1.5px solid #a4a4a4;box-sizing:border-box;background:linear-gradient(#fff,#e4e4e4)"></div>
<div style="position:absolute;left:106.5px;top:502.80000000000007px;width:10px;height:2.2px;background:#444"></div>
<div style="position:absolute;left:110.5px;top:498.30000000000007px;width:2.2px;height:11px;background:#444"></div>
<div class="t" style="left:177.5px;top:535.7px;font-size:28px;line-height:28px;color:#111;font-weight:normal;">Materials</div>
<svg style="position:absolute;left:130px;top:533.4000000000001px;overflow:visible" width="33" height="33" viewBox="0 0 33 33"><path d="M2 0 V32" stroke="#222" stroke-width="2"/><text x="6" y="12" font-size="11" font-family="Liberation Sans" fill="#222">σ</text><path d="M4 30 Q12 12 30 12" stroke="#555" stroke-width="1.5" fill="none"/><text x="18" y="30" font-size="14" font-family="Liberation Sans" fill="#222">ε</text></svg>
<div class="t" style="left:177.5px;top:581.3px;font-size:28px;line-height:28px;color:#111;font-weight:normal;">Calibrations</div>
<svg style="position:absolute;left:130px;top:579.0px;overflow:visible" width="33" height="33" viewBox="0 0 33 33"><circle cx="16" cy="18" r="13" fill="#b0c4e0" stroke="#222" stroke-width="2"/><path d="M8 10 L18 20" stroke="#c01818" stroke-width="3"/><path d="M16 0 V5 M6 4 L9 7 M26 4 L23 7" stroke="#222" stroke-width="2"/></svg>
<div class="t" style="left:177.5px;top:626.9px;font-size:28px;line-height:28px;color:#111;font-weight:normal;">Sections</div>
<svg style="position:absolute;left:130px;top:624.6px;overflow:visible" width="33" height="33" viewBox="0 0 33 33"><path d="M6 8 H26 M6 28 H26 M16 8 V28" stroke="#d07030" stroke-width="5"/><path d="M16 0 V32 M4 18 H30" stroke="#444" stroke-width="1.5"/></svg>
<div class="t" style="left:177.5px;top:672.5px;font-size:28px;line-height:28px;color:#111;font-weight:normal;">Profiles</div>
<svg style="position:absolute;left:130px;top:670.2px;overflow:visible" width="33" height="33" viewBox="0 0 33 33"><rect x="4" y="10" width="22" height="14" fill="#f0c0a0" stroke="#d05030" stroke-width="2"/><path d="M15 0 V32 M0 17 H32" stroke="#333" stroke-width="2"/></svg>
<div class="t" style="left:177.5px;top:718.1px;font-size:28px;line-height:28px;color:#111;font-weight:normal;">Assembly</div>
<svg style="position:absolute;left:130px;top:715.8px;overflow:visible" width="33" height="33" viewBox="0 0 33 33"><path d="M8 0 V6" stroke="#c02040" stroke-width="1.5"/><rect x="2" y="8" width="18" height="24" fill="#a090b0"/><path d="M2 10 H20" stroke="#fff" stroke-width="1.2" stroke-dasharray="2 2"/><path d="M2 15 H20" stroke="#fff" stroke-width="1.2" stroke-dasharray="2 2"/><path d="M2 20 H20" stroke="#fff" stroke-width="1.2" stroke-dasharray="2 2"/><path d="M2 25 H20" stroke="#fff" stroke-width="1.2" stroke-dasharray="2 2"/><path d="M2 30 H20" stroke="#fff" stroke-width="1.2" stroke-dasharray="2 2"/><rect x="18" y="18" width="12" height="14" fill="#5a8a50" stroke="#222" stroke-width="1.5"/><circle cx="24" cy="5" r="4" fill="#fff" stroke="#111" stroke-width="2"/><path d="M24 9 V18 M20 13 H28" stroke="#111" stroke-width="2"/></svg>
<div style="position:absolute;left:102.5px;top:722.3px;width:19px;height:19px;border:1.5px solid #a4a4a4;box-sizing:border-box;background:linear-gradient(#fff,#e4e4e4)"></div>
<div style="position:absolute;left:106.5px;top:730.8px;width:10px;height:2.2px;background:#444"></div>
<div style="position:absolute;left:110.5px;top:726.3px;width:2.2px;height:11px;background:#444"></div>
<div class="t" style="left:177.5px;top:763.7px;font-size:28px;line-height:28px;color:#111;font-weight:normal;">Steps (1)</div>
<svg style="position:absolute;left:130px;top:761.4000000000001px;overflow:visible" width="33" height="33" viewBox="0 0 33 33"><circle cx="4" cy="24" r="4" fill="none" stroke="#222" stroke-width="1.6"/><rect x="14" y="6" width="9" height="9" fill="none" stroke="#222" stroke-width="2"/><rect x="20" y="19" width="11" height="11" fill="#3a6a4a" stroke="#222" stroke-width="1.6"/><path d="M8 24 H20 M18 15 V24" stroke="#222" stroke-width="1.6"/></svg>
<div style="position:absolute;left:102.5px;top:767.9000000000001px;width:19px;height:19px;border:1.5px solid #a4a4a4;box-sizing:border-box;background:linear-gradient(#fff,#e4e4e4)"></div>
<div style="position:absolute;left:106.5px;top:776.4000000000001px;width:10px;height:2.2px;background:#444"></div>
<div style="position:absolute;left:110.5px;top:771.9000000000001px;width:2.2px;height:11px;background:#444"></div>
<div class="t" style="left:177.5px;top:809.3px;font-size:28px;line-height:28px;color:#111;font-weight:normal;">Field Output Requests</div>
<svg style="position:absolute;left:130px;top:807.0px;overflow:visible" width="33" height="33" viewBox="0 0 33 33"><path d="M2 4 H14 V12 H28 V22 H2 Z" fill="#fff" stroke="#333" stroke-width="2"/><path d="M8 16 H22" stroke="#d02020" stroke-width="2"/><text x="0" y="33" font-size="9" font-family="Liberation Sans" fill="#222">IIOIO</text></svg>
<div class="t" style="left:177.5px;top:854.9px;font-size:28px;line-height:28px;color:#111;font-weight:normal;">History Output Requests</div>
<svg style="position:absolute;left:130px;top:852.6px;overflow:visible" width="33" height="33" viewBox="0 0 33 33"><path d="M2 4 H14 V12 H28 V22 H2 Z" fill="#fff" stroke="#333" stroke-width="2"/><path d="M8 16 H22" stroke="#d02020" stroke-width="2"/><text x="0" y="33" font-size="9" font-family="Liberation Sans" fill="#222">IIOIO</text></svg>
<div class="t" style="left:177.5px;top:900.5px;font-size:28px;line-height:28px;color:#111;font-weight:normal;">Time Points</div>
<svg style="position:absolute;left:130px;top:898.2px;overflow:visible" width="33" height="33" viewBox="0 0 33 33"><path d="M2 4 V28 H30 M2 12 H28 M8 6 V18 M16 6 V18 M24 6 V18" stroke="#333" stroke-width="1.8" fill="none"/><text x="22" y="26" font-size="10" fill="#222" font-family="Liberation Sans">t</text></svg>
<div class="t" style="left:177.5px;top:946.1px;font-size:28px;line-height:28px;color:#111;font-weight:normal;">ALE Adaptive Mesh Constraints</div>
<svg style="position:absolute;left:130px;top:943.8000000000001px;overflow:visible" width="33" height="33" viewBox="0 0 33 33"><rect x="4" y="2" width="10" height="26" fill="#b8bccc" stroke="#222" stroke-width="1.8"/><rect x="4" y="16" width="26" height="12" fill="#b8bccc" stroke="#222" stroke-width="1.8"/><path d="M2 32 L6 28 M8 32 L12 28 M14 32 L18 28 M20 32 L24 28 M26 32 L30 28" stroke="#c02020" stroke-width="1.5"/></svg>
<div class="t" style="left:177.5px;top:991.7px;font-size:28px;line-height:28px;color:#111;font-weight:normal;">Interactions</div>
<svg style="position:absolute;left:130px;top:989.4000000000001px;overflow:visible" width="33" height="33" viewBox="0 0 33 33"><rect x="4" y="1" width="24" height="8" fill="#f0d070" stroke="#222" stroke-width="1.8"/><rect x="4" y="24" width="26" height="8" fill="#556070" stroke="#222" stroke-width="1.8"/><path d="M10 9 V24 M22 9 V24" stroke="#208060" stroke-width="2" stroke-dasharray="3 2"/></svg>
<div class="t" style="left:177.5px;top:1037.3px;font-size:28px;line-height:28px;color:#111;font-weight:normal;">Interaction Properties</div>
<svg style="position:absolute;left:130px;top:1035.0px;overflow:visible" width="33" height="33" viewBox="0 0 33 33"><rect x="4" y="1" width="24" height="8" fill="#f0d070" stroke="#222" stroke-width="1.8"/><rect x="4" y="24" width="26" height="8" fill="#556070" stroke="#222" stroke-width="1.8"/><path d="M10 9 V24 M22 9 V24" stroke="#208060" stroke-width="2"/><path d="M0 15 H32" stroke="#e02020" stroke-width="2.5"/></svg>
<div class="t" style="left:177.5px;top:1082.9px;font-size:28px;line-height:28px;color:#111;font-weight:normal;">Contact Controls</div>
<svg style="position:absolute;left:130px;top:1080.6px;overflow:visible" width="33" height="33" viewBox="0 0 33 33"><path d="M4 2 V32" stroke="#333" stroke-width="2"/><path d="M1 6 L5 2 M1 12 L5 8 M1 18 L5 14 M1 24 L5 20 M1 30 L5 26" stroke="#703070" stroke-width="1.5"/><path d="M30 2 V32 H18 Q12 18 22 6 Z" fill="#f0c860" stroke="#444" stroke-width="1.5"/><path d="M8 10 V26 M14 10 V26 M8 18 H20" stroke="#3a3aa0" stroke-width="2"/></svg>
<div class="t" style="left:177.5px;top:1128.5px;font-size:28px;line-height:28px;color:#111;font-weight:normal;">Contact Initializations</div>
<svg style="position:absolute;left:130px;top:1126.2px;overflow:visible" width="33" height="33" viewBox="0 0 33 33"><path d="M4 2 V32" stroke="#333" stroke-width="2"/><path d="M1 6 L5 2 M1 12 L5 8 M1 18 L5 14 M1 24 L5 20 M1 30 L5 26" stroke="#703070" stroke-width="1.5"/><path d="M30 2 V32 H18 Q12 18 22 6 Z" fill="#f0c860" stroke="#444" stroke-width="1.5"/><path d="M10 4 H20 V14" stroke="#d02020" stroke-width="2" fill="none"/><path d="M10 16 V30" stroke="#333" stroke-width="2"/></svg>
<div class="t" style="left:177.5px;top:1174.1px;font-size:28px;line-height:28px;color:#111;font-weight:normal;">Contact Stabilizations</div>
<svg style="position:absolute;left:130px;top:1171.8000000000002px;overflow:visible" width="33" height="33" viewBox="0 0 33 33"><path d="M4 2 V32" stroke="#333" stroke-width="2"/><path d="M1 6 L5 2 M1 12 L5 8 M1 18 L5 14 M1 24 L5 20 M1 30 L5 26" stroke="#703070" stroke-width="1.5"/><path d="M30 2 V32 H18 Q12 18 22 6 Z" fill="#f0c860" stroke="#444" stroke-width="1.5"/><path d="M0 4 Q8 -2 16 6 Q24 -2 32 4" stroke="#208080" stroke-width="1.5" fill="none"/><path d="M18 10 V28" stroke="#20a040" stroke-width="2.5"/></svg>
<div class="t" style="left:177.5px;top:1219.7px;font-size:28px;line-height:28px;color:#111;font-weight:normal;">Constraints</div>
<svg style="position:absolute;left:130px;top:1217.4px;overflow:visible" width="33" height="33" viewBox="0 0 33 33"><path d="M16 2 H30 V32 H16 Z" fill="#f0c860" stroke="#222" stroke-width="2"/><path d="M16 2 L0 16 L16 30 M0 16 H16" stroke="#222" stroke-width="2" fill="none"/></svg>
<div class="t" style="left:177.5px;top:1265.3px;font-size:28px;line-height:28px;color:#111;font-weight:normal;">Connector Sections</div>
<svg style="position:absolute;left:130px;top:1263.0px;overflow:visible" width="33" height="33" viewBox="0 0 33 33"><rect x="2" y="2" width="28" height="28" fill="#fff" stroke="#222" stroke-width="2"/><rect x="6" y="8" width="22" height="18" fill="#bbb" stroke="#222" stroke-width="2"/><rect x="12" y="13" width="12" height="8" fill="#e02020" stroke="#222" stroke-width="1.5"/><path d="M0 18 H10" stroke="#222" stroke-width="3"/></svg>
<div class="t" style="left:177.5px;top:1310.9px;font-size:28px;line-height:28px;color:#111;font-weight:normal;">Fields</div>
<svg style="position:absolute;left:130px;top:1308.6px;overflow:visible" width="33" height="33" viewBox="0 0 33 33"><text x="2" y="28" font-size="32" font-style="italic" font-weight="bold" font-family="Liberation Serif" fill="#111">F</text></svg>
<div style="position:absolute;left:102.5px;top:1315.1px;width:19px;height:19px;border:1.5px solid #a4a4a4;box-sizing:border-box;background:linear-gradient(#fff,#e4e4e4)"></div>
<div style="position:absolute;left:106.5px;top:1323.6px;width:10px;height:2.2px;background:#444"></div>
<div style="position:absolute;left:110.5px;top:1319.1px;width:2.2px;height:11px;background:#444"></div>
<div class="t" style="left:177.5px;top:1356.5px;font-size:28px;line-height:28px;color:#111;font-weight:normal;">Amplitudes</div>
<svg style="position:absolute;left:130px;top:1354.2px;overflow:visible" width="33" height="33" viewBox="0 0 33 33"><path d="M2 32 V6 Q8 -2 14 14 Q20 34 30 10" stroke="#b03040" stroke-width="2.2" fill="none"/></svg>
<div class="t" style="left:177.5px;top:1402.1px;font-size:28px;line-height:28px;color:#111;font-weight:normal;">Loads</div>
<svg style="position:absolute;left:130px;top:1399.8000000000002px;overflow:visible" width="33" height="33" viewBox="0 0 33 33"><path d="M4 2 V30 H30 V18 H14 V2 Z" fill="#b8bccc" stroke="#222" stroke-width="2"/><path d="M22 0 V14" stroke="#d02020" stroke-width="2.5"/><polygon points="22,17 17,10 27,10" fill="#d02020"/></svg>
<div class="t" style="left:177.5px;top:1447.7px;font-size:28px;line-height:28px;color:#111;font-weight:normal;">BCs</div>
<svg style="position:absolute;left:130px;top:1445.4px;overflow:visible" width="33" height="33" viewBox="0 0 33 33"><path d="M4 2 V28 H30 V16 H14 V2 Z" fill="#b8bccc" stroke="#222" stroke-width="2"/><path d="M2 33 L6 29 M8 33 L12 29 M14 33 L18 29 M20 33 L24 29 M26 33 L30 29" stroke="#c02020" stroke-width="1.5"/></svg>
<div class="t" style="left:177.5px;top:1493.3px;font-size:28px;line-height:28px;color:#111;font-weight:normal;">Predefined Fields</div>
<svg style="position:absolute;left:130px;top:1491.0px;overflow:visible" width="33" height="33" viewBox="0 0 33 33"><path d="M4 2 V30 H30 V18 H14 V2 Z" fill="#c8e070" stroke="#222" stroke-width="2"/><path d="M6 8 H12 M6 16 H12 M16 24 H28" stroke="#e0a020" stroke-width="2" stroke-dasharray="2 2"/></svg>
<div class="t" style="left:177.5px;top:1538.9px;font-size:28px;line-height:28px;color:#111;font-weight:normal;">Remeshing Rules</div>
<svg style="position:absolute;left:130px;top:1536.6px;overflow:visible" width="33" height="33" viewBox="0 0 33 33"><path d="M2 2 H14 L18 6 V22 H2 Z" fill="#fff" stroke="#222" stroke-width="1.8"/><path d="M5 10 H15 M5 14 H15 M5 18 H15" stroke="#333" stroke-width="1.2"/><rect x="14" y="14" width="18" height="18" fill="#556a88" stroke="#222" stroke-width="1.5"/><path d="M20 14 V32 M26 14 V32 M14 20 H32 M14 26 H32" stroke="#fff" stroke-width="1"/></svg>
<div class="t" style="left:177.5px;top:1584.5px;font-size:28px;line-height:28px;color:#111;font-weight:normal;">Optimization Tasks</div>
<svg style="position:absolute;left:130px;top:1582.2000000000003px;overflow:visible" width="33" height="33" viewBox="0 0 33 33"><rect x="1" y="2" width="13" height="28" fill="#f0b040"/><path d="M4 2 V30 M8 2 V30" stroke="#d08020" stroke-width="1"/><polygon points="14,2 32,2 24,16 32,30 14,30 22,16" fill="#1a8a40"/><path d="M8 16 H20" stroke="#d02020" stroke-width="2"/></svg>
<div class="t" style="left:177.5px;top:1630.1px;font-size:28px;line-height:28px;color:#111;font-weight:normal;">Sketches</div>
<svg style="position:absolute;left:130px;top:1627.8000000000002px;overflow:visible" width="33" height="33" viewBox="0 0 33 33"><path d="M6 2 V28 H30 V16 H16 V2 Z" fill="#fff" stroke="#222" stroke-width="2"/><path d="M2 2 V30 M6 32 H30" stroke="#c02020" stroke-width="1.5"/></svg>
<div class="t" style="left:99.5px;top:1675.7px;font-size:28px;line-height:28px;color:#111;font-weight:normal;">Annotations</div>
<svg style="position:absolute;left:52px;top:1673.4px;overflow:visible" width="33" height="33" viewBox="0 0 33 33"><path d="M0 12 L18 28" stroke="#111" stroke-width="2"/><polygon points="16,22 22,30 12,28" fill="#111"/><text x="18" y="14" font-size="16" font-style="italic" font-weight="bold" font-family="Liberation Sans" fill="#111">A</text></svg>
<div class="t" style="left:99.5px;top:1721.3px;font-size:28px;line-height:28px;color:#111;font-weight:normal;">Analysis</div>
<svg style="position:absolute;left:50px;top:1719.0px;overflow:visible" width="36" height="33" viewBox="0 0 36 33"><path d="M8 0 V32" stroke="#0a3a5a" stroke-width="2.5"/><polygon points="2,4 14,4 8,12" fill="#0a4a6a"/><polygon points="2,12 14,12 8,4" fill="#0a4a6a"/><polygon points="2,20 14,20 8,28" fill="#0a4a6a"/><polygon points="2,28 14,28 8,20" fill="#0a4a6a"/><path d="M28 0 V32" stroke="#0a3a5a" stroke-width="2.5"/><polygon points="22,4 34,4 28,12" fill="#0a4a6a"/><polygon points="22,12 34,12 28,4" fill="#0a4a6a"/><polygon points="22,20 34,20 28,28" fill="#0a4a6a"/><polygon points="22,28 34,28 28,20" fill="#0a4a6a"/></svg>
<div style="position:absolute;left:26px;top:1725.5px;width:17px;height:19px;border:1.5px solid #a4a4a4;border-left:none;box-sizing:border-box;background:linear-gradient(#fff,#e4e4e4)"></div>
<div style="position:absolute;left:27px;top:1734.0px;width:10px;height:2.2px;background:#444"></div>
<div class="t" style="left:137.8px;top:1766.9px;font-size:28px;line-height:28px;color:#111;font-weight:normal;">Jobs</div>
<svg style="position:absolute;left:91px;top:1764.6px;overflow:visible" width="33" height="33" viewBox="0 0 33 33"><rect x="6" y="0" width="20" height="16" fill="#5a70e0" stroke="#223" stroke-width="2"/><path d="M16 16 V22" stroke="#223" stroke-width="3"/><rect x="2" y="22" width="28" height="8" fill="#b8bccc" stroke="#223" stroke-width="2"/></svg>
<div class="t" style="left:137.8px;top:1812.5px;font-size:28px;line-height:28px;color:#111;font-weight:normal;">Adaptivity Processes</div>
<svg style="position:absolute;left:91px;top:1810.2000000000003px;overflow:visible" width="33" height="33" viewBox="0 0 33 33"><rect x="0" y="0" width="12" height="16" fill="#6a7a90" stroke="#223" stroke-width="1.5"/><rect x="14" y="14" width="18" height="18" fill="#6a90b0" stroke="#223" stroke-width="1.5"/><path d="M4 16 Q4 30 14 28" stroke="#d02040" stroke-width="3" fill="none"/></svg>
<div class="t" style="left:137.8px;top:1858.1px;font-size:28px;line-height:28px;color:#111;font-weight:normal;">Co-executions</div>
<svg style="position:absolute;left:91px;top:1855.8000000000002px;overflow:visible" width="33" height="33" viewBox="0 0 33 33"><rect x="0" y="4" width="14" height="26" fill="#a0b0d0" stroke="#666" stroke-width="1.2"/><rect x="18" y="4" width="14" height="26" fill="#a0b0d0" stroke="#666" stroke-width="1.2"/><path d="M10 12 H22 M10 22 H22" stroke="#d04060" stroke-width="2"/></svg>
<div class="t" style="left:137.8px;top:1903.7px;font-size:28px;line-height:28px;color:#111;font-weight:normal;">Optimization Processes</div>
<svg style="position:absolute;left:91px;top:1901.4px;overflow:visible" width="33" height="33" viewBox="0 0 33 33"><rect x="1" y="2" width="13" height="28" fill="#f0b040"/><path d="M4 2 V30 M8 2 V30" stroke="#d08020" stroke-width="1"/><polygon points="14,2 32,2 24,16 32,30 14,30 22,16" fill="#1a8a40"/><path d="M8 16 H20" stroke="#d02020" stroke-width="2"/></svg>
<div style="position:absolute;left:93px;top:473.5px;width:111px;height:3.2px;background:#111"></div>
<div style="position:absolute;left:32.5px;top:424px;width:0;height:1291.0px;border-left:2px dotted #b0b0b0"></div>
<div style="position:absolute;left:34px;top:1688.4px;width:16px;height:0;border-top:2px dotted #b0b0b0"></div>
<div style="position:absolute;left:72px;top:434px;width:0;height:15px;border-left:2px dotted #b0b0b0"></div>
<div style="position:absolute;left:111px;top:477px;width:0;height:1166.8000000000002px;border-left:2px dotted #b0b0b0"></div>
<div style="position:absolute;left:113px;top:548.4000000000001px;width:15px;height:0;border-top:2px dotted #b0b0b0"></div>
<div style="position:absolute;left:113px;top:594.0px;width:15px;height:0;border-top:2px dotted #b0b0b0"></div>
<div style="position:absolute;left:113px;top:639.6px;width:15px;height:0;border-top:2px dotted #b0b0b0"></div>
<div style="position:absolute;left:113px;top:685.2px;width:15px;height:0;border-top:2px dotted #b0b0b0"></div>
<div style="position:absolute;left:113px;top:822.0px;width:15px;height:0;border-top:2px dotted #b0b0b0"></div>
<div style="position:absolute;left:113px;top:867.6px;width:15px;height:0;border-top:2px dotted #b0b0b0"></div>
<div style="position:absolute;left:113px;top:913.2px;width:15px;height:0;border-top:2px dotted #b0b0b0"></div>
<div style="position:absolute;left:113px;top:958.8000000000001px;width:15px;height:0;border-top:2px dotted #b0b0b0"></div>
<div style="position:absolute;left:113px;top:1004.4000000000001px;width:15px;height:0;border-top:2px dotted #b0b0b0"></div>
<div style="position:absolute;left:113px;top:1050.0px;width:15px;height:0;border-top:2px dotted #b0b0b0"></div>
<div style="position:absolute;left:113px;top:1095.6px;width:15px;height:0;border-top:2px dotted #b0b0b0"></div>
<div style="position:absolute;left:113px;top:1141.2px;width:15px;height:0;border-top:2px dotted #b0b0b0"></div>
<div style="position:absolute;left:113px;top:1186.8000000000002px;width:15px;height:0;border-top:2px dotted #b0b0b0"></div>
<div style="position:absolute;left:113px;top:1232.4px;width:15px;height:0;border-top:2px dotted #b0b0b0"></div>
<div style="position:absolute;left:113px;top:1278.0px;width:15px;height:0;border-top:2px dotted #b0b0b0"></div>
<div style="position:absolute;left:113px;top:1369.2px;width:15px;height:0;border-top:2px dotted #b0b0b0"></div>
<div style="position:absolute;left:113px;top:1414.8000000000002px;width:15px;height:0;border-top:2px dotted #b0b0b0"></div>
<div style="position:absolute;left:113px;top:1460.4px;width:15px;height:0;border-top:2px dotted #b0b0b0"></div>
<div style="position:absolute;left:113px;top:1506.0px;width:15px;height:0;border-top:2px dotted #b0b0b0"></div>
<div style="position:absolute;left:113px;top:1551.6px;width:15px;height:0;border-top:2px dotted #b0b0b0"></div>
<div style="position:absolute;left:113px;top:1597.2000000000003px;width:15px;height:0;border-top:2px dotted #b0b0b0"></div>
<div style="position:absolute;left:113px;top:1642.8000000000002px;width:15px;height:0;border-top:2px dotted #b0b0b0"></div>
<div style="position:absolute;left:72px;top:1747.0px;width:0;height:170.4000000000001px;border-left:2px dotted #b0b0b0"></div>
<div style="position:absolute;left:74px;top:1779.6px;width:16px;height:0;border-top:2px dotted #b0b0b0"></div>
<div style="position:absolute;left:74px;top:1825.2000000000003px;width:16px;height:0;border-top:2px dotted #b0b0b0"></div>
<div style="position:absolute;left:74px;top:1870.8000000000002px;width:16px;height:0;border-top:2px dotted #b0b0b0"></div>
<div style="position:absolute;left:74px;top:1916.4px;width:16px;height:0;border-top:2px dotted #b0b0b0"></div>
<div class="t" style="left:670px;top:266.5px;font-size:28px;line-height:28px;color:#222;font-weight:normal;">Module:</div>
<div class="t" style="left:1057px;top:266.5px;font-size:28px;line-height:28px;color:#222;font-weight:normal;">Model:</div>
<div class="t" style="left:1398px;top:266.5px;font-size:28px;line-height:28px;color:#222;font-weight:normal;">Step:</div>
<div style="position:absolute;left:785px;top:256px;width:241px;height:51px;background:#fff;border:1.5px solid #9a9a9a;box-sizing:border-box"></div>
<div style="position:absolute;left:787px;top:258px;width:21px;height:47px;background:linear-gradient(90deg,#f4f4f4,#e4e4e4);border-right:1px solid #d0d0d0"></div>
<svg style="position:absolute;left:790px;top:264px;overflow:visible" width="14" height="36" viewBox="0 0 14 36"><polygon points="7,1 13,9 1,9" fill="#555"/><polygon points="7,35 13,27 1,27" fill="#555"/><path d="M1 18 H13" stroke="#ccc"/></svg>
<div style="position:absolute;left:1001px;top:258px;width:23px;height:47px;background:#d8d8d8;border-left:1px solid #bdbdbd"></div>
<svg style="position:absolute;left:1004px;top:276px;overflow:visible" width="16" height="12" viewBox="0 0 16 12"><path d="M1 2 L8 9 L15 2" stroke="#888" stroke-width="2" fill="none"/></svg>
<div class="t" style="left:815px;top:266.5px;font-size:28px;line-height:28px;color:#111;font-weight:normal;">Assembly</div>
<div style="position:absolute;left:1156px;top:256px;width:211px;height:51px;background:#fff;border:1.5px solid #9a9a9a;box-sizing:border-box"></div>
<div style="position:absolute;left:1158px;top:258px;width:21px;height:47px;background:linear-gradient(90deg,#f4f4f4,#e4e4e4);border-right:1px solid #d0d0d0"></div>
<svg style="position:absolute;left:1161px;top:264px;overflow:visible" width="14" height="36" viewBox="0 0 14 36"><polygon points="7,1 13,9 1,9" fill="#555"/><polygon points="7,35 13,27 1,27" fill="#555"/><path d="M1 18 H13" stroke="#ccc"/></svg>
<div style="position:absolute;left:1342px;top:258px;width:23px;height:47px;background:#d8d8d8;border-left:1px solid #bdbdbd"></div>
<svg style="position:absolute;left:1345px;top:276px;overflow:visible" width="16" height="12" viewBox="0 0 16 12"><path d="M1 2 L8 9 L15 2" stroke="#888" stroke-width="2" fill="none"/></svg>
<div class="t" style="left:1187px;top:266.5px;font-size:28px;line-height:28px;color:#111;font-weight:normal;">Model-1</div>
<div style="position:absolute;left:1471px;top:256px;width:212px;height:51px;background:#fff;border:1.5px solid #9a9a9a;box-sizing:border-box"></div>
<div style="position:absolute;left:1473px;top:258px;width:21px;height:47px;background:linear-gradient(90deg,#f4f4f4,#e4e4e4);border-right:1px solid #d0d0d0"></div>
<svg style="position:absolute;left:1476px;top:264px;overflow:visible" width="14" height="36" viewBox="0 0 14 36"><polygon points="7,1 13,9 1,9" fill="#555"/><polygon points="7,35 13,27 1,27" fill="#555"/><path d="M1 18 H13" stroke="#ccc"/></svg>
<div style="position:absolute;left:1658px;top:258px;width:23px;height:47px;background:#d8d8d8;border-left:1px solid #bdbdbd"></div>
<svg style="position:absolute;left:1661px;top:276px;overflow:visible" width="16" height="12" viewBox="0 0 16 12"><path d="M1 2 L8 9 L15 2" stroke="#888" stroke-width="2" fill="none"/></svg>
<div class="t" style="left:1501px;top:266.5px;font-size:28px;line-height:28px;color:#111;font-weight:normal;">Initial</div>
<div style="position:absolute;left:640px;top:315px;width:147px;height:1640px;background:linear-gradient(90deg,#f6f6f6,#f0f0f0)"></div>
<div style="position:absolute;left:787px;top:318px;width:2px;height:1637px;background:#7a7a7a"></div>
<div style="position:absolute;left:656px;top:571px;width:125px;height:2px;background:#c0c0c0"></div>
<div style="position:absolute;left:656px;top:708px;width:125px;height:2px;background:#c0c0c0"></div>
<div style="position:absolute;left:656px;top:846px;width:125px;height:2px;background:#c0c0c0"></div>
<svg style="position:absolute;left:666.0px;top:332.0px;overflow:visible" width="46" height="46" viewBox="0 0 46 46"><path transform="translate(0,0) scale(1)" d="M4 4 H16 V24 H40 V40 H4 Z" fill="#8fa4c4" stroke="#2a3a5a" stroke-width="2.5"/><path d="M28 14 Q32 4 38 8" stroke="#d04020" stroke-width="2" fill="none"/></svg>
<svg style="position:absolute;left:726.0px;top:332.0px;overflow:visible" width="46" height="46" viewBox="0 0 46 46"><rect x="5" y="5" width="7" height="7" fill="#2a2a6a"/><rect x="20" y="5" width="7" height="7" fill="#2a2a6a"/><rect x="35" y="5" width="7" height="7" fill="#2a2a6a"/><rect x="5" y="20" width="7" height="7" fill="#2a2a6a"/><rect x="20" y="20" width="7" height="7" fill="#2a2a6a"/><rect x="35" y="20" width="7" height="7" fill="#2a2a6a"/><rect x="5" y="35" width="7" height="7" fill="#2a2a6a"/><rect x="20" y="35" width="7" height="7" fill="#2a2a6a"/><rect x="35" y="35" width="7" height="7" fill="#2a2a6a"/></svg>
<svg style="position:absolute;left:666.0px;top:394.0px;overflow:visible" width="46" height="46" viewBox="0 0 46 46"><rect x="36.0" y="20.0" width="6" height="6" fill="#2a2a6a"/><rect x="31.318212306675196" y="31.309202897685857" width="6" height="6" fill="#2a2a6a"/><rect x="20.01274122737173" y="35.99999492690935" width="6" height="6" fill="#2a2a6a"/><rect x="8.699813682879917" y="31.327214538374914" width="6" height="6" fill="#2a2a6a"/><rect x="4.000020292359368" y="20.02548244666379" width="6" height="6" fill="#2a2a6a"/><rect x="8.663790412923635" y="8.708837429304372" width="6" height="6" fill="#2a2a6a"/><rect x="19.961776350203497" y="4.000045657796512" width="6" height="6" fill="#2a2a6a"/><rect x="31.282131664134766" y="8.654802552924531" width="6" height="6" fill="#2a2a6a"/></svg>
<svg style="position:absolute;left:726.0px;top:394.0px;overflow:visible" width="46" height="46" viewBox="0 0 46 46"><path transform="translate(8,-4) scale(0.7)" d="M4 4 H16 V24 H40 V40 H4 Z" fill="#8fa4c4" stroke="#2a3a5a" stroke-width="2.5"/><path transform="translate(-2,16) scale(0.7)" d="M4 4 H16 V24 H40 V40 H4 Z" fill="#8fa4c4" stroke="#2a3a5a" stroke-width="2.5"/><path d="M8 40 L30 20" stroke="#1a70c0" stroke-width="3"/></svg>
<svg style="position:absolute;left:666.0px;top:453.0px;overflow:visible" width="46" height="46" viewBox="0 0 46 46"><path transform="translate(-2,14) scale(0.75)" d="M4 4 H16 V24 H40 V40 H4 Z" fill="#8fa4c4" stroke="#2a3a5a" stroke-width="2.5"/><path d="M20 4 H38 V12 H28 V30 H20 Z" fill="#c8ccd8" stroke="#666" stroke-width="2" stroke-dasharray="3 2"/><path d="M6 18 Q8 6 18 8" stroke="#1a70c0" stroke-width="3" fill="none"/></svg>
<svg style="position:absolute;left:726.0px;top:453.0px;overflow:visible" width="46" height="46" viewBox="0 0 46 46"><path transform="translate(0,6) scale(0.95)" d="M4 4 H16 V24 H40 V40 H4 Z" fill="#8fa4c4" stroke="#2a3a5a" stroke-width="2.5"/><circle cx="26" cy="8" r="7" fill="#20b040" stroke="#186a30" stroke-width="1.5"/><path d="M26 15 V32" stroke="#1a70c0" stroke-width="2.5"/></svg>
<svg style="position:absolute;left:666.0px;top:515.0px;overflow:visible" width="46" height="46" viewBox="0 0 46 46"><path d="M4 12 L14 6 V36 L4 40 Z" fill="#20b040" stroke="#186a30" stroke-width="1"/><path d="M20 22 L28 18 V38 L20 40 Z" fill="#2a9a40"/><path d="M28 18 H42 V30 L36 36" stroke="#888" stroke-width="1.5" fill="#e8eef8"/><path d="M36 26 L30 34" stroke="#1a70c0" stroke-width="2.5"/></svg>
<svg style="position:absolute;left:726.0px;top:515.0px;overflow:visible" width="46" height="46" viewBox="0 0 46 46"><circle cx="17" cy="23" r="15" fill="#b8bccc" stroke="#444" stroke-width="2"/><circle cx="29" cy="23" r="15" fill="#fff" fill-opacity="0.6" stroke="#444" stroke-width="2"/></svg>
<svg style="position:absolute;left:666.0px;top:590.0px;overflow:visible" width="46" height="46" viewBox="0 0 46 46"><rect x="4" y="30" width="36" height="12" fill="#f0d070" stroke="#4a4a2a" stroke-width="2"/><rect x="12" y="6" width="14" height="24" fill="#f0d070" stroke="#4a4a2a" stroke-width="2"/><path d="M12 14 H26" stroke="#d05020" stroke-width="2" stroke-dasharray="3 2"/><path d="M32 8 V28" stroke="#d05020" stroke-width="2" stroke-dasharray="3 2"/></svg>
<svg style="position:absolute;left:726.0px;top:590.0px;overflow:visible" width="46" height="46" viewBox="0 0 46 46"><rect x="4" y="30" width="18" height="12" fill="#f0d070" stroke="#4a4a2a" stroke-width="2"/><rect x="8" y="6" width="8" height="24" fill="#f0d070" stroke="#4a4a2a" stroke-width="2"/><rect x="26" y="30" width="18" height="12" fill="#f0d070" stroke="#4a4a2a" stroke-width="2"/><path d="M20 18 H36" stroke="#e02020" stroke-width="3"/><polygon points="40,18 32,13 32,23" fill="#e02020"/></svg>
<svg style="position:absolute;left:666.0px;top:649.0px;overflow:visible" width="46" height="46" viewBox="0 0 46 46"><rect x="2" y="30" width="36" height="14" fill="#f0d070" stroke="#4a4a2a" stroke-width="2"/><path d="M12 8 V30" stroke="#333" stroke-width="2" stroke-dasharray="3 2"/><path d="M14 34 L36 8" stroke="#e8b060" stroke-width="10"/><rect x="12" y="20" width="12" height="10" fill="#e088b0"/></svg>
<svg style="position:absolute;left:666.0px;top:732.0px;overflow:visible" width="46" height="46" viewBox="0 0 46 46"><path d="M2 8 H44" stroke="#333" stroke-width="2" stroke-dasharray="6 3"/><path d="M16 2 V14 M10 8 H22" stroke="#1a70c0" stroke-width="3"/><polygon points="20,16 20,40 26,34 32,44 36,42 30,32 38,32" fill="#fff" stroke="#222" stroke-width="2"/></svg>
<svg style="position:absolute;left:726.0px;top:732.0px;overflow:visible" width="46" height="46" viewBox="0 0 46 46"><path d="M6 4 H18 V28 H42 V40 H6 Z" fill="#f0d070" stroke="#4a4a2a" stroke-width="2"/><circle cx="12" cy="34" r="5" fill="none" stroke="#d02020" stroke-width="2"/></svg>
<svg style="position:absolute;left:666.0px;top:788.0px;overflow:visible" width="46" height="46" viewBox="0 0 46 46"><path d="M4 4 H16 V26 H40 V42 H4 Z" fill="#f0d070" stroke="#4a4a2a" stroke-width="2"/><rect x="22" y="26" width="16" height="16" fill="#e86030"/></svg>
<svg style="position:absolute;left:726.0px;top:788.0px;overflow:visible" width="46" height="46" viewBox="0 0 46 46"><path d="M4 2 H16 V24 H32 V36 H4 Z" fill="#f0d070" stroke="#4a4a2a" stroke-width="2"/><path d="M18 20 L34 36" stroke="#333" stroke-width="2"/><circle cx="34" cy="40" r="4" fill="none" stroke="#d02020" stroke-width="2"/><circle cx="42" cy="34" r="4" fill="none" stroke="#d02020" stroke-width="2"/></svg>
<svg style="position:absolute;left:664.0px;top:857.0px;overflow:visible" width="50" height="46" viewBox="0 0 50 46"><text x="2" y="18" font-size="15" font-weight="bold" font-family="Liberation Mono" fill="#222">(XYZ)</text><path d="M22 26 V40 M15 33 H29" stroke="#1a70c0" stroke-width="3"/></svg>
<svg style="position:absolute;left:726.0px;top:857.0px;overflow:visible" width="46" height="46" viewBox="0 0 46 46"><path d="M22 2 V26 L8 38 M22 26 L36 38" stroke="#222" stroke-width="2.5" fill="none"/><polygon points="22,0 17,9 27,9" fill="#1a70c0"/><path d="M10 36 Q22 30 34 36" stroke="#222" stroke-width="2" fill="none"/></svg>
<svg style="position:absolute;left:666.0px;top:924.0px;overflow:visible" width="46" height="46" viewBox="0 0 46 46"><path d="M10 4 V18 L2 26 M10 18 H24" stroke="#222" stroke-width="2.5" fill="none"/><path d="M2 38 H26" stroke="#222" stroke-width="3"/><polygon points="28,12 40,4 40,30 28,38" fill="#f0d070" stroke="#555" stroke-width="1.5"/></svg>
<svg style="position:absolute;left:726.0px;top:924.0px;overflow:visible" width="46" height="46" viewBox="0 0 46 46"><path d="M22 4 V12 M18 8 H26" stroke="#e02020" stroke-width="2.5"/><circle cx="22" cy="20" r="3" fill="#1a70c0"/><path d="M22 24 V30 L8 40 M22 30 L36 40" stroke="#1a70c0" stroke-width="2.5" stroke-dasharray="4 2" fill="none"/><path d="M34 40 H42 M38 36 V44" stroke="#e02020" stroke-width="2.5"/></svg>
<svg style="position:absolute;left:707px;top:558px;overflow:visible" width="8" height="8" viewBox="0 0 8 8"><polygon points="8,0 8,8 0,8" fill="#111"/></svg>
<svg style="position:absolute;left:766px;top:595px;overflow:visible" width="8" height="8" viewBox="0 0 8 8"><polygon points="8,0 8,8 0,8" fill="#111"/></svg>
<svg style="position:absolute;left:707px;top:641px;overflow:visible" width="8" height="8" viewBox="0 0 8 8"><polygon points="8,0 8,8 0,8" fill="#111"/></svg>
<svg style="position:absolute;left:766px;top:641px;overflow:visible" width="8" height="8" viewBox="0 0 8 8"><polygon points="8,0 8,8 0,8" fill="#111"/></svg>
<svg style="position:absolute;left:707px;top:779px;overflow:visible" width="8" height="8" viewBox="0 0 8 8"><polygon points="8,0 8,8 0,8" fill="#111"/></svg>
<svg style="position:absolute;left:766px;top:779px;overflow:visible" width="8" height="8" viewBox="0 0 8 8"><polygon points="8,0 8,8 0,8" fill="#111"/></svg>
<svg style="position:absolute;left:707px;top:838px;overflow:visible" width="8" height="8" viewBox="0 0 8 8"><polygon points="8,0 8,8 0,8" fill="#111"/></svg>
<svg style="position:absolute;left:707px;top:906px;overflow:visible" width="8" height="8" viewBox="0 0 8 8"><polygon points="8,0 8,8 0,8" fill="#111"/></svg>
<svg style="position:absolute;left:766px;top:906px;overflow:visible" width="8" height="8" viewBox="0 0 8 8"><polygon points="8,0 8,8 0,8" fill="#111"/></svg>
<svg style="position:absolute;left:707px;top:973px;overflow:visible" width="8" height="8" viewBox="0 0 8 8"><polygon points="8,0 8,8 0,8" fill="#111"/></svg>
<svg style="position:absolute;left:766px;top:973px;overflow:visible" width="8" height="8" viewBox="0 0 8 8"><polygon points="8,0 8,8 0,8" fill="#111"/></svg>
<div style="position:absolute;left:787px;top:317px;width:2333px;height:2px;background:#4a4a4a"></div>
<svg style="position:absolute;left:0;top:0" width="3134" height="1972" viewBox="0 0 3134 1972">
<defs><mask id="m1" maskUnits="userSpaceOnUse" x="0" y="0" width="3134" height="1972"><rect x="0" y="0" width="3134" height="1972" fill="#fff"/>
<rect x="1600" y="700" width="602" height="379" fill="#000"/>
<rect x="1140" y="860" width="502" height="316" fill="#000"/>
</mask></defs>
<polygon points="818.8,847.5 960.0,782.5 953.0,695.0 1293.8,538.8 1372.5,586.2 1510.0,530.0 2386.2,1051.2 2453.8,1053.8 2553.8,1056.2 2568.8,1057.5 2590.0,1069.0 2702.5,1010.0 3098.8,1236.2 3082.5,1520.2 2970.0,1584.0 2796.2,1686.5 2685.0,1751.2 2560.0,1671.2 2523.8,1690.0 2443.8,1735.0 2425.0,1723.8 2426.2,1663.8 2403.8,1675.0 2256.2,1581.2 2200.0,1611.2 2000.0,1722.5 1876.2,1633.8 1806.2,1673.8 1790.0,1665.0 1786.2,1570.0 1762.5,1553.8 1765.0,1617.5 1741.2,1628.8 1721.2,1613.8 1625.0,1547.5 1582.5,1520.0 1580.0,1470.0 1541.2,1487.5 1525.0,1478.8 1521.2,1386.2 1500.0,1372.5 1502.5,1436.2 1480.0,1446.2 1460.0,1432.5 1370.0,1370.0 1330.0,1343.8 1327.5,1297.5 1291.2,1313.8 1276.2,1301.2 1271.2,1213.8 1251.2,1198.8 1256.2,1261.2 1232.5,1272.5 1215.0,1256.2 1130.0,1198.8 1091.2,1171.2 1087.5,1132.5 1053.8,1147.5 1041.2,1138.8 1033.8,1050.0 1018.8,1040.0 1021.2,1100.0 1000.0,1108.8 833.8,993.8 825.0,907.5 820.0,860.0" fill="#0085ee"/>
<polygon points="953.0,695.0 1020.0,736.2 1206.2,858.8 1250.0,889.0 1401.5,985.0 1451.2,1019.0 1497.5,1050.0 1707.5,1186.2 1757.5,1221.0 1980.0,1367.5 2075.0,1427.5 2075.0,1521.2 1980.0,1461.2 1807.5,1345.0 1760.0,1313.8 1710.0,1281.0 1647.5,1238.8 1557.5,1181.2 1498.8,1140.0 1453.8,1110.0 1400.0,1072.5 1255.0,978.8 1211.2,947.5 1080.0,860.0 1023.8,822.5 960.0,782.5" fill="#0080e6"/>
<polygon points="2075.0,1427.5 2137.5,1393.8 2318.8,1297.5 2320.0,1386.2 2257.5,1425.0 2075.0,1521.2" fill="#00579f"/>
<polygon points="2075.0,1521.2 2257.5,1425.0 2257.5,1538.8 2075.0,1538.8" fill="#00579f"/>
<polygon points="2318.8,1297.5 2329.5,1290.0 2328.8,1385.0 2320.0,1386.2" fill="#00579f"/>
<polygon points="1227.5,1183.8 1251.2,1198.8 1256.2,1261.2 1232.5,1272.5" fill="#0062b0"/>
<polygon points="1285.0,1222.5 1303.8,1236.2 1306.2,1305.0 1291.2,1313.8" fill="#0062b0"/>
<polygon points="1303.8,1236.2 1325.0,1248.8 1327.5,1297.5 1306.2,1305.0" fill="#0062b0"/>
<polygon points="1475.0,1355.0 1500.0,1371.2 1501.2,1436.2 1480.0,1445.0" fill="#0062b0"/>
<polygon points="1536.2,1397.5 1560.0,1415.0 1562.5,1478.8 1540.0,1487.5" fill="#0062b0"/>
<polygon points="1560.0,1415.0 1577.5,1423.8 1578.8,1470.0 1562.5,1478.8" fill="#0062b0"/>
<polygon points="1525.0,1400.0 1537.5,1400.0 1560.0,1412.5 1578.8,1425.0 1580.0,1470.0 1541.2,1487.5 1526.2,1480.0" fill="#0062b0"/>
<polygon points="1738.8,1536.2 1762.5,1553.8 1765.0,1617.5 1741.2,1628.8" fill="#0062b0"/>
<polygon points="1802.5,1580.0 1826.2,1597.5 1827.5,1660.0 1806.2,1673.8" fill="#0062b0"/>
<polygon points="1826.2,1597.5 1875.0,1632.5 1875.0,1637.5 1827.5,1660.0" fill="#0062b0"/>
<polygon points="1925.0,1603.8 2067.5,1527.5 2071.2,1586.2 1927.5,1666.2" fill="#00579f"/>
<polygon points="1997.5,1630.0 2071.2,1587.5 2101.5,1570.0 2101.5,1667.5 2000.0,1722.5" fill="#00579f"/>
<polygon points="2075.0,1427.5 2101.5,1415.0 2101.5,1570.0 2071.2,1586.2 2072.5,1522.5" fill="#00579f"/>
<polygon points="2696.2,1466.5 2807.5,1404.0 3097.5,1236.5 3092.5,1359.0 3082.5,1520.2 2710.0,1737.8 2686.2,1754.0" fill="#00579f"/>
<polygon points="2500.0,1549.0 2526.2,1534.0 2562.5,1515.2 2560.0,1671.5 2500.0,1704.0" fill="#00579f"/>
<polygon points="2406.2,1550.0 2427.5,1566.2 2426.2,1663.8 2403.8,1675.0" fill="#00579f"/>
<polygon points="2446.2,1576.2 2526.2,1535.0 2523.8,1690.0 2443.8,1735.0" fill="#00579f"/>
<polygon points="2526.2,1535.0 2562.5,1515.0 2560.0,1671.2 2523.8,1690.0" fill="#00579f"/>
<polygon points="2075.0,1521.0 2257.5,1425.0 2256.2,1581.2 2200.0,1611.2 2075.0,1680.0" fill="#00579f"/>
<polygon points="993.8,1022.5 1018.8,1040.0 1021.2,1100.0 1000.0,1108.8" fill="#0062b0"/>
<polygon points="1046.2,1057.5 1071.2,1075.0 1076.2,1133.8 1053.8,1147.5" fill="#0062b0"/>
<polygon points="1071.2,1075.0 1085.0,1080.0 1087.5,1132.5 1076.2,1133.8" fill="#0062b0"/>
<g mask="url(#m1)" fill="none" stroke="#0a0a40" stroke-width="2.2" stroke-linejoin="round">
<polyline points="818.8,847.5 960.0,782.5"/>
<polyline points="953.0,695.0 960.0,782.5"/>
<polyline points="953.0,695.0 1293.8,538.8 1372.5,586.2"/>
<polyline points="953.0,695.0 1020.0,736.2 1206.2,858.8"/>
<polyline points="1020.0,736.2 1023.8,822.5"/>
<polyline points="1020.0,736.2 1078.8,708.8 1316.2,600.0 1358.8,581.2"/>
<polyline points="1015.0,667.5 1078.8,708.8 1267.5,831.2 1307.5,860.0"/>
<polyline points="1252.5,560.0 1316.2,600.0 1401.5,652.5"/>
<polyline points="1372.5,586.2 1401.5,603.5"/>
<polyline points="1206.2,858.8 1267.5,831.2 1401.5,767.5"/>
<polyline points="1307.5,860.0 1401.5,816.2"/>
<polyline points="960.0,782.5 1023.8,822.5 1066.2,851.2"/>
<polyline points="881.2,818.8 943.8,861.2 1022.5,825.0"/>
<polyline points="1372.5,586.2 1510.0,530.0 2001.5,820.0"/>
<polyline points="1546.2,601.2 1592.5,580.0"/>
<polyline points="1546.2,601.2 2001.5,875.0"/>
<polyline points="1401.5,603.5 1555.0,700.0 1800.0,848.8 1847.5,878.8"/>
<polyline points="1401.5,652.5 1752.5,867.5 1777.5,878.8"/>
<polyline points="1401.5,767.5 1555.0,698.8"/>
<polyline points="1401.5,816.2 1598.8,726.2"/>
<polyline points="1737.5,878.8 1800.0,848.8"/>
<polyline points="2000.0,818.8 2386.2,1051.2 2453.8,1053.8 2553.8,1056.2 2568.8,1057.5 2591.2,1070.0 2601.5,1063.8"/>
<polyline points="2000.0,873.8 2450.0,1142.5"/>
<polyline points="2335.0,1075.0 2382.5,1051.2"/>
<polyline points="2000.0,970.0 2062.5,1007.5 2110.0,1037.5 2327.5,1168.8"/>
<polyline points="2000.0,1040.0 2062.5,1007.5"/>
<polyline points="2000.0,1018.8 2011.2,1028.8 2056.2,1062.5 2255.0,1178.8"/>
<polyline points="2000.0,1095.0 2110.0,1038.8"/>
<polyline points="2303.8,1178.8 2327.5,1168.8"/>
<polyline points="2390.0,1178.8 2447.5,1142.5 2590.0,1070.0"/>
<polyline points="2759.6,1041.8 2701.6,1009.9 2590.0,1069.7"/>
<polyline points="2384.7,1049.8 2335.8,1073.7"/>
<polyline points="2392.6,1175.4 2380.7,1292.0"/>
<polyline points="2590.0,1069.7 2449.4,1143.5 2392.6,1175.4"/>
<polyline points="2332.8,1172.4 2327.8,1292.0"/>
<polyline points="2280.0,1139.5 2330.8,1170.4"/>
<polyline points="2280.0,1191.3 2323.9,1169.4"/>
<polyline points="2280.0,1193.3 2292.0,1200.3 2280.0,1208.3"/>
<polyline points="2335.8,1261.1 2427.5,1212.3 2439.5,1220.2 2427.5,1228.2 2454.4,1246.1 2512.2,1280.0 2563.1,1254.1 2626.8,1292.0"/>
<polyline points="2389.6,1237.2 2423.5,1261.1 2453.4,1292.0"/>
<polyline points="2423.5,1261.1 2454.4,1246.1"/>
<polyline points="2335.8,1268.1 2375.7,1292.0"/>
<polyline points="2349.8,1258.1 2411.6,1292.0"/>
<polyline points="820.0,860.0 825.0,907.5 832.5,982.5 833.8,993.8"/>
<polyline points="833.8,993.8 895.0,1035.0 1000.0,1108.8 1021.2,1100.0 1018.8,1040.0"/>
<polyline points="825.0,907.5 886.2,946.2"/>
<polyline points="890.0,952.5 975.0,1007.5"/>
<polyline points="882.5,891.2 895.0,1035.0"/>
<polyline points="837.5,860.0 882.5,891.2 935.0,867.5 995.0,936.2"/>
<polyline points="882.5,891.2 972.5,951.2 995.0,940.0 1008.8,951.2 987.5,960.0"/>
<polyline points="972.5,951.2 981.2,1095.0"/>
<polyline points="987.5,960.0 1000.0,1108.8"/>
<polyline points="987.5,960.0 1082.5,1023.8"/>
<polyline points="976.2,1010.0 993.8,1022.5 1018.8,1040.0 1033.8,1050.0"/>
<polyline points="993.8,1022.5 1000.0,1108.8"/>
<polyline points="1033.8,1050.0 1041.2,1138.8 1053.8,1147.5 1087.5,1132.5 1085.0,1080.0"/>
<polyline points="1046.2,1057.5 1053.8,1147.5"/>
<polyline points="1071.2,1075.0 1076.2,1133.8"/>
<polyline points="1081.2,1025.0 1091.2,1171.2"/>
<polyline points="1091.2,1171.2 1130.0,1198.8 1185.0,1238.8"/>
<polyline points="1082.5,1023.8 1120.0,1051.2 1205.0,1108.8 1230.0,1097.5 1243.8,1110.0 1222.5,1120.0"/>
<polyline points="1120.0,1051.2 1130.0,1198.8"/>
<polyline points="1085.0,1086.2 1123.8,1110.0"/>
<polyline points="1127.5,1115.0 1207.5,1171.2"/>
<polyline points="1205.0,1108.8 1212.5,1238.8"/>
<polyline points="1222.5,1120.0 1228.8,1238.8"/>
<polyline points="1222.5,1120.0 1321.2,1190.0"/>
<polyline points="1321.2,1190.0 1322.5,1238.8"/>
<polyline points="1227.5,1182.5 1253.8,1202.5 1253.8,1238.8"/>
<polyline points="1022.5,872.5 1050.0,860.0"/>
<polyline points="1022.5,872.5 1040.0,891.2 1076.2,875.0"/>
<polyline points="1070.0,866.2 1076.2,875.0 1157.5,928.8 1097.5,956.2 1040.0,891.2"/>
<polyline points="1080.0,860.0 1211.2,947.5"/>
<polyline points="1111.2,967.5 1172.5,940.0"/>
<polyline points="1111.2,967.5 1138.8,985.0 1200.0,957.5"/>
<polyline points="1172.5,940.0 1255.0,978.8"/>
<polyline points="1082.5,1023.8 1146.2,995.0 1177.5,1012.5 1245.0,983.8"/>
<polyline points="1138.8,985.0 1146.2,995.0"/>
<polyline points="1120.0,1051.2 1167.5,1030.0 1230.0,1097.5"/>
<polyline points="1258.8,1031.2 1297.5,1007.5"/>
<polyline points="1258.8,1031.2 1275.0,1047.5 1307.5,1030.0"/>
<polyline points="1300.0,1022.5 1307.5,1030.0 1396.2,1087.5 1335.0,1118.8 1275.0,1047.5"/>
<polyline points="1310.0,860.0 1401.5,917.5"/>
<polyline points="1297.5,1007.5 1401.5,1072.5"/>
<polyline points="1207.5,860.0 1211.2,947.5"/>
<polyline points="1250.0,888.8 1255.0,978.8"/>
<polyline points="1207.5,865.0 1250.0,888.8 1310.0,860.0"/>
<polyline points="1211.2,947.5 1255.0,978.8 1401.5,1065.0"/>
<polyline points="1250.0,890.0 1401.5,985.0"/>
<polyline points="1321.2,1190.0 1401.5,1147.5"/>
<polyline points="1321.2,1190.0 1362.5,1217.5 1401.5,1200.0"/>
<polyline points="1400.0,916.2 1557.5,1018.8 1770.0,1156.2 1897.5,1238.8"/>
<polyline points="1400.0,986.2 1451.2,1018.8"/>
<polyline points="1451.2,1020.0 1497.5,1050.0 1707.5,1186.2 1757.5,1220.0 1782.5,1238.8"/>
<polyline points="1750.0,875.0 1802.5,901.2 2001.5,1020.0"/>
<polyline points="1820.0,860.0 1846.2,877.5 2001.5,971.2"/>
<polyline points="1975.0,860.0 2001.5,875.0"/>
<polyline points="1400.0,1072.5 1453.8,1110.0 1498.8,1140.0 1557.5,1181.2 1647.5,1238.8"/>
<polyline points="1443.8,1118.8 1486.2,1145.0"/>
<polyline points="1547.5,1185.0 1557.5,1196.2 1631.2,1238.8"/>
<polyline points="1412.5,1192.5 1457.5,1238.8"/>
<polyline points="1502.5,1193.8 1530.0,1225.0"/>
<polyline points="1451.2,1018.8 1757.5,868.8 1780.0,860.0"/>
<polyline points="1497.5,1050.0 1802.5,901.2 1882.5,860.0"/>
<polyline points="1707.5,1186.2 2001.5,1036.2"/>
<polyline points="1757.5,1220.0 2001.5,1093.8"/>
<polyline points="1400.0,1137.5 1453.8,1111.2"/>
<polyline points="1411.2,1185.0 1498.8,1142.5"/>
<polyline points="1502.5,1193.8 1547.5,1172.5"/>
<polyline points="1522.5,1213.8 1557.5,1197.5"/>
<polyline points="1451.2,1020.0 1453.8,1111.2"/>
<polyline points="1497.5,1050.0 1500.0,1141.2"/>
<polyline points="1707.5,1186.2 1710.0,1238.8"/>
<polyline points="1756.2,1220.0 1756.2,1238.8"/>
<polyline points="2075.0,1427.5 2075.0,1538.8"/>
<polyline points="2137.5,1393.8 2137.5,1487.5"/>
<polyline points="2318.8,1297.5 2320.0,1386.2"/>
<polyline points="2075.0,1427.5 2137.5,1393.8 2318.8,1297.5"/>
<polyline points="2075.0,1521.2 2320.0,1386.2"/>
<polyline points="2000.0,1303.8 2137.5,1393.8"/>
<polyline points="2000.0,1380.0 2075.0,1427.5"/>
<polyline points="2000.0,1357.5 2292.5,1201.2 2280.0,1192.5"/>
<polyline points="2225.0,1160.0 2280.0,1192.5 2322.5,1170.0 2330.0,1171.2"/>
<polyline points="2225.0,1240.0 2318.8,1296.2"/>
<polyline points="2000.0,1472.5 2075.0,1521.2"/>
<polyline points="2330.0,1171.2 2328.8,1385.0"/>
<polyline points="2392.5,1175.0 2386.2,1235.0 2380.0,1396.2"/>
<polyline points="2392.5,1175.0 2425.0,1160.0"/>
<polyline points="2333.8,1261.2 2425.0,1212.5 2440.0,1220.0 2427.5,1228.8 2512.5,1280.0 2562.5,1253.8 2601.5,1276.2"/>
<polyline points="2335.0,1267.5 2380.0,1293.8"/>
<polyline points="2350.0,1258.8 2380.0,1276.2"/>
<polyline points="2332.5,1332.5 2380.0,1307.5"/>
<polyline points="2390.0,1238.8 2545.0,1373.8"/>
<polyline points="2382.5,1275.0 2545.0,1372.5"/>
<polyline points="2422.5,1261.2 2453.8,1245.0"/>
<polyline points="2545.0,1373.8 2601.5,1345.0"/>
<polyline points="2545.0,1373.8 2542.5,1500.0"/>
<polyline points="2545.0,1373.8 2586.2,1396.2 2601.5,1406.2"/>
<polyline points="2585.0,1397.5 2581.2,1525.0"/>
<polyline points="2328.8,1385.0 2345.0,1375.0 2540.0,1500.0"/>
<polyline points="2332.5,1386.2 2410.0,1455.0 2457.5,1490.0"/>
<polyline points="2260.0,1427.5 2355.0,1485.0 2405.0,1520.0 2440.0,1538.8"/>
<polyline points="2260.0,1457.5 2355.0,1515.0 2387.5,1538.8"/>
<polyline points="2355.0,1485.0 2410.0,1455.0"/>
<polyline points="2405.0,1520.0 2457.5,1490.0"/>
<polyline points="2257.5,1425.0 2257.5,1538.8"/>
<polyline points="2353.8,1485.0 2353.8,1538.8"/>
<polyline points="2405.0,1520.0 2405.0,1538.8"/>
<polyline points="2475.0,1538.8 2540.0,1501.2 2562.5,1515.0 2562.5,1538.8"/>
<polyline points="1400.0,1245.0 1453.8,1280.0 1477.5,1267.5 1493.8,1280.0 1472.5,1292.5"/>
<polyline points="1440.0,1220.0 1477.5,1267.5"/>
<polyline points="1453.8,1280.0 1460.0,1432.5"/>
<polyline points="1472.5,1292.5 1480.0,1445.0"/>
<polyline points="1400.0,1392.5 1460.0,1432.5 1480.0,1446.2 1502.5,1436.2 1500.0,1372.5"/>
<polyline points="1400.0,1302.5 1456.2,1341.2"/>
<polyline points="1460.0,1343.8 1475.0,1355.0 1500.0,1371.2 1522.5,1386.2"/>
<polyline points="1475.0,1355.0 1480.0,1445.0"/>
<polyline points="1472.5,1292.5 1576.2,1365.0"/>
<polyline points="1521.2,1386.2 1525.0,1478.8 1541.2,1487.5 1580.0,1470.0 1578.8,1425.0"/>
<polyline points="1536.2,1397.5 1541.2,1487.5"/>
<polyline points="1560.0,1412.5 1562.5,1476.2"/>
<polyline points="1576.2,1365.0 1582.5,1518.8"/>
<polyline points="1582.5,1518.8 1625.0,1546.2 1695.0,1598.8"/>
<polyline points="1576.2,1365.0 1620.0,1393.8 1715.0,1460.0 1741.2,1446.2 1757.5,1461.2 1736.2,1472.5"/>
<polyline points="1620.0,1393.8 1625.0,1546.2"/>
<polyline points="1581.2,1427.5 1620.0,1455.0"/>
<polyline points="1623.8,1460.0 1715.0,1517.5 1737.5,1533.8 1762.5,1552.5 1762.5,1598.8"/>
<polyline points="1715.0,1460.0 1720.0,1598.8"/>
<polyline points="1736.2,1472.5 1740.0,1598.8"/>
<polyline points="1736.2,1472.5 1912.5,1598.8"/>
<polyline points="1576.2,1365.0 1643.8,1330.0 1635.0,1320.0 1702.5,1285.0 1710.0,1281.2"/>
<polyline points="1620.0,1393.8 1671.2,1370.0 1670.0,1362.5 1745.0,1318.8"/>
<polyline points="1671.2,1370.0 1741.2,1446.2"/>
<polyline points="1697.5,1290.0 1742.5,1318.8"/>
<polyline points="1708.8,1220.0 1710.0,1281.2"/>
<polyline points="1756.2,1220.0 1758.8,1312.5"/>
<polyline points="1710.0,1281.2 1760.0,1313.8 1807.5,1345.0 1980.0,1461.2 2001.5,1475.0"/>
<polyline points="1765.0,1370.0 1807.5,1347.5"/>
<polyline points="1765.0,1370.0 1783.8,1392.5 1820.0,1371.2"/>
<polyline points="1812.5,1362.5 1820.0,1371.2 1918.8,1435.0 1857.5,1470.0 1783.8,1392.5"/>
<polyline points="1872.5,1480.0 1935.0,1447.5 1966.2,1468.8 1903.8,1502.5 1872.5,1480.0"/>
<polyline points="1980.0,1367.5 1981.2,1462.5"/>
<polyline points="1980.0,1367.5 2001.5,1356.2"/>
<polyline points="1757.5,1223.8 1980.0,1367.5"/>
<polyline points="1867.5,1220.0 2001.5,1306.2"/>
<polyline points="1932.5,1598.8 2001.5,1562.5"/>
<polyline points="1525.0,1220.0 1587.5,1290.0 1651.2,1257.5 1595.0,1220.0"/>
<polyline points="1617.5,1220.0 1710.0,1280.0"/>
<polyline points="1100.0,1180.0 1130.0,1198.8 1215.0,1256.2 1232.5,1272.5 1256.2,1261.2 1251.2,1198.8 1271.2,1213.8"/>
<polyline points="1227.5,1183.8 1232.5,1272.5"/>
<polyline points="1130.0,1180.0 1130.0,1198.8"/>
<polyline points="1210.0,1180.0 1215.0,1256.2"/>
<polyline points="1271.2,1213.8 1276.2,1301.2 1291.2,1313.8 1327.5,1297.5 1325.0,1247.5"/>
<polyline points="1285.0,1222.5 1290.0,1312.5"/>
<polyline points="1303.8,1236.2 1306.2,1305.0"/>
<polyline points="1321.2,1192.5 1330.0,1343.8"/>
<polyline points="1330.0,1343.8 1370.0,1370.0 1460.0,1430.0 1480.0,1445.0 1501.2,1436.2 1500.0,1372.5 1520.0,1386.2"/>
<polyline points="1362.5,1218.8 1370.0,1368.8"/>
<polyline points="1452.5,1280.0 1460.0,1430.0"/>
<polyline points="1471.2,1292.5 1478.8,1443.8"/>
<polyline points="1321.2,1192.5 1362.5,1218.8 1452.5,1280.0 1477.5,1267.5 1492.5,1280.0 1471.2,1292.5 1575.0,1365.0"/>
<polyline points="1325.0,1253.8 1362.5,1277.5"/>
<polyline points="1366.2,1282.5 1455.0,1340.0 1472.5,1351.2 1500.0,1370.0"/>
<polyline points="1520.0,1386.2 1525.0,1478.8 1540.0,1488.8 1578.8,1470.0 1577.5,1420.0"/>
<polyline points="1536.2,1397.5 1540.0,1487.5"/>
<polyline points="1560.0,1415.0 1562.5,1478.8"/>
<polyline points="1575.0,1365.0 1581.2,1518.8 1601.5,1532.5"/>
<polyline points="1577.5,1426.2 1601.5,1441.2"/>
<polyline points="1322.5,1190.0 1342.5,1180.0"/>
<polyline points="1362.5,1218.8 1412.5,1193.8 1410.0,1187.5 1425.0,1180.0"/>
<polyline points="1412.5,1193.8 1477.5,1267.5"/>
<polyline points="1502.5,1195.0 1550.0,1180.0"/>
<polyline points="1502.5,1195.0 1521.2,1213.8 1557.5,1196.2"/>
<polyline points="1550.0,1190.0 1557.5,1196.2 1601.5,1222.5"/>
<polyline points="1521.2,1213.8 1587.5,1287.5 1601.5,1280.0"/>
<polyline points="1575.0,1365.0 1601.5,1352.5"/>
<polyline points="1525.0,1400.0 1526.2,1480.0 1541.2,1487.5 1580.0,1470.0 1578.8,1425.0"/>
<polyline points="1537.5,1400.0 1541.2,1487.5"/>
<polyline points="1560.0,1412.5 1562.5,1476.2"/>
<polyline points="1578.8,1400.0 1582.5,1520.0"/>
<polyline points="1582.5,1520.0 1625.0,1547.5 1721.2,1613.8 1741.2,1628.8 1765.0,1617.5 1762.5,1553.8 1786.2,1570.0"/>
<polyline points="1621.2,1400.0 1625.0,1547.5"/>
<polyline points="1715.0,1460.0 1721.2,1613.8"/>
<polyline points="1736.2,1473.8 1741.2,1628.8"/>
<polyline points="1622.5,1400.0 1715.0,1460.0 1741.2,1446.2 1756.2,1461.2 1736.2,1473.8 1925.0,1603.8"/>
<polyline points="1580.0,1427.5 1621.2,1453.8"/>
<polyline points="1625.0,1457.5 1715.0,1518.8 1736.2,1532.5 1762.5,1553.8"/>
<polyline points="1786.2,1570.0 1790.0,1665.0 1806.2,1673.8 1875.0,1637.5"/>
<polyline points="1802.5,1580.0 1806.2,1673.8"/>
<polyline points="1826.2,1597.5 1827.5,1660.0"/>
<polyline points="1925.0,1603.8 1927.5,1666.2"/>
<polyline points="1925.0,1603.8 2067.5,1527.5 2071.2,1586.2"/>
<polyline points="1927.5,1666.2 2071.2,1586.2"/>
<polyline points="1876.2,1633.8 2000.0,1722.5 2101.5,1667.5"/>
<polyline points="1997.5,1630.0 2000.0,1722.5"/>
<polyline points="2071.2,1586.2 2071.2,1681.2"/>
<polyline points="2075.0,1427.5 2072.5,1522.5"/>
<polyline points="1981.2,1400.0 1981.2,1461.2 2075.0,1522.5"/>
<polyline points="1978.8,1463.8 2071.2,1525.0"/>
<polyline points="2075.0,1427.5 2101.5,1415.0"/>
<polyline points="1790.0,1400.0 1856.2,1470.0 1920.0,1436.2 1862.5,1400.0"/>
<polyline points="1873.8,1480.0 1935.0,1447.5 1966.2,1468.8 1902.5,1501.2 1873.8,1480.0"/>
<polyline points="1895.0,1400.0 1981.2,1460.0"/>
<polyline points="2588.8,1068.8 2702.5,1010.0 3098.8,1236.2 3096.2,1300.0"/>
<polyline points="2500.0,1118.8 2588.8,1068.8"/>
<polyline points="2983.8,1177.5 2877.5,1236.2 2700.0,1335.0 2657.5,1358.8"/>
<polyline points="2877.5,1236.2 2983.8,1300.0 3098.8,1236.2"/>
<polyline points="2983.8,1300.0 2983.8,1358.8"/>
<polyline points="2983.8,1302.5 2885.0,1358.8"/>
<polyline points="2500.0,1275.0 2513.8,1280.0 2562.5,1255.0 2657.5,1312.5 2575.0,1358.8"/>
<polyline points="2700.0,1335.0 2732.5,1358.8"/>
<polyline points="2500.0,1347.5 2522.5,1358.8"/>
<polyline points="2696.2,1466.5 2807.5,1404.0 2887.5,1359.0"/>
<polyline points="2696.2,1466.5 2686.2,1737.8"/>
<polyline points="2807.5,1404.0 2796.2,1686.5"/>
<polyline points="2983.8,1299.0 2970.0,1584.0"/>
<polyline points="3092.5,1359.0 3082.5,1520.2 2970.0,1584.0 2796.2,1686.5 2710.0,1737.8"/>
<polyline points="2587.5,1397.8 2696.2,1466.5"/>
<polyline points="2737.5,1359.0 2807.5,1404.0"/>
<polyline points="2587.5,1397.8 2655.0,1359.0"/>
<polyline points="2550.0,1374.0 2587.5,1397.8"/>
<polyline points="2550.0,1372.8 2575.0,1359.0"/>
<polyline points="2586.2,1399.0 2582.5,1525.2"/>
<polyline points="2547.5,1375.2 2543.8,1500.2"/>
<polyline points="2543.8,1500.2 2582.5,1524.0"/>
<polyline points="2500.0,1472.8 2543.8,1500.2"/>
<polyline points="2500.0,1525.2 2540.0,1502.8 2562.5,1515.2 2526.2,1532.8 2523.8,1690.2"/>
<polyline points="2562.5,1515.2 2560.0,1671.5 2500.0,1704.0"/>
<polyline points="2560.0,1671.5 2686.2,1737.8"/>
<polyline points="2500.0,1547.8 2526.2,1532.8"/>
<polyline points="2200.0,1611.2 2256.2,1581.2 2403.8,1675.0 2426.2,1663.8"/>
<polyline points="2426.2,1663.8 2425.0,1723.8 2443.8,1735.0 2523.8,1690.0 2560.0,1671.2 2685.0,1751.2 2801.5,1690.0"/>
<polyline points="2257.5,1500.0 2256.2,1581.2"/>
<polyline points="2353.8,1500.0 2353.8,1641.2"/>
<polyline points="2406.2,1520.0 2403.8,1675.0"/>
<polyline points="2427.5,1565.0 2426.2,1663.8"/>
<polyline points="2446.2,1576.2 2443.8,1735.0"/>
<polyline points="2526.2,1535.0 2523.8,1690.0"/>
<polyline points="2562.5,1515.0 2560.0,1671.2"/>
<polyline points="2695.0,1500.0 2685.0,1751.2"/>
<polyline points="2800.0,1500.0 2798.8,1685.0"/>
<polyline points="2330.0,1500.0 2353.8,1515.0"/>
<polyline points="2353.8,1518.8 2406.2,1547.5 2427.5,1565.0"/>
<polyline points="2375.0,1500.0 2406.2,1518.8 2452.5,1548.8"/>
<polyline points="2406.2,1518.8 2440.0,1500.0"/>
<polyline points="2452.5,1548.8 2542.5,1501.2"/>
<polyline points="2430.0,1567.5 2446.2,1576.2 2526.2,1535.0 2562.5,1515.0"/>
<polyline points="2507.5,1522.5 2526.2,1535.0"/>
<polyline points="2542.5,1500.0 2581.2,1525.0 2582.5,1500.0"/>
</g><g fill="none" stroke="#0a0a40" stroke-width="2.2" stroke-linejoin="round">
<polyline points="1600.0,725.0 2201.5,1094.2"/>
<polyline points="1600.0,773.8 1753.8,868.8"/>
<polyline points="1751.2,876.2 2012.5,1028.8"/>
<polyline points="2010.0,1036.2 2057.5,1065.0"/>
<polyline points="2068.8,1063.8 2097.5,1078.8"/>
<polyline points="1705.0,700.0 2201.5,995.0"/>
<polyline points="1600.0,946.2 1800.0,848.8"/>
<polyline points="1600.0,997.5 1847.5,876.2"/>
<polyline points="1922.5,1078.8 2060.0,1007.5"/>
<polyline points="2032.5,1078.8 2110.0,1038.8"/>
<polyline points="1206.7,860.0 1213.0,948.6"/>
<polyline points="1208.8,864.2 1251.4,889.8 1312.9,860.0"/>
<polyline points="1251.4,889.8 1255.7,979.9"/>
<polyline points="1312.9,860.0 1511.2,988.3 1641.8,1072.7"/>
<polyline points="1252.6,893.4 1450.7,1018.5 1498.7,1048.7 1641.8,1143.6"/>
<polyline points="1450.7,1018.5 1511.2,988.3 1641.8,926.7"/>
<polyline points="1498.7,1048.7 1559.2,1020.6 1641.8,981.0"/>
<polyline points="1450.7,1019.5 1454.9,1109.2"/>
<polyline points="1497.7,1048.7 1499.7,1140.5"/>
<polyline points="1140.0,909.0 1213.0,948.6"/>
<polyline points="1213.0,950.1 1255.7,979.9 1454.9,1109.2 1499.7,1140.5 1555.0,1176.0"/>
<polyline points="1140.0,928.2 1160.0,943.2 1140.0,954.3"/>
<polyline points="1140.0,954.3 1171.7,938.4 1200.1,956.8 1212.4,950.1"/>
<polyline points="1140.0,984.1 1200.1,956.8 1244.9,986.2"/>
<polyline points="1140.0,989.3 1177.5,1012.2 1244.3,984.1 1255.7,980.5"/>
<polyline points="1140.0,1039.4 1167.1,1028.9 1242.2,1112.3"/>
<polyline points="1140.0,1065.4 1204.7,1109.2 1229.7,1096.7 1244.3,1112.3 1223.4,1121.7 1300.6,1176.0"/>
<polyline points="1204.7,1109.2 1208.8,1176.0"/>
<polyline points="1223.4,1121.7 1225.5,1176.0"/>
<polyline points="1257.8,1030.0 1298.5,1007.0"/>
<polyline points="1257.8,1030.0 1274.5,1046.7 1311.0,1030.0"/>
<polyline points="1300.6,1022.7 1311.0,1030.0 1397.6,1088.4 1335.0,1118.6 1274.5,1047.7"/>
<polyline points="1379.8,1148.8 1454.9,1111.3"/>
<polyline points="1379.8,1148.8 1388.2,1155.1 1348.6,1176.0"/>
<polyline points="1442.4,1118.6 1484.1,1145.7"/>
<polyline points="1427.8,1176.0 1499.7,1140.5"/>
</g>
<polygon points="818.8,847.5 960.0,782.5 953.0,695.0 1293.8,538.8 1372.5,586.2 1510.0,530.0 2386.2,1051.2 2453.8,1053.8 2553.8,1056.2 2568.8,1057.5 2590.0,1069.0 2702.5,1010.0 3098.8,1236.2 3082.5,1520.2 2970.0,1584.0 2796.2,1686.5 2685.0,1751.2 2560.0,1671.2 2523.8,1690.0 2443.8,1735.0 2425.0,1723.8 2426.2,1663.8 2403.8,1675.0 2256.2,1581.2 2200.0,1611.2 2000.0,1722.5 1876.2,1633.8 1806.2,1673.8 1790.0,1665.0 1786.2,1570.0 1762.5,1553.8 1765.0,1617.5 1741.2,1628.8 1721.2,1613.8 1625.0,1547.5 1582.5,1520.0 1580.0,1470.0 1541.2,1487.5 1525.0,1478.8 1521.2,1386.2 1500.0,1372.5 1502.5,1436.2 1480.0,1446.2 1460.0,1432.5 1370.0,1370.0 1330.0,1343.8 1327.5,1297.5 1291.2,1313.8 1276.2,1301.2 1271.2,1213.8 1251.2,1198.8 1256.2,1261.2 1232.5,1272.5 1215.0,1256.2 1130.0,1198.8 1091.2,1171.2 1087.5,1132.5 1053.8,1147.5 1041.2,1138.8 1033.8,1050.0 1018.8,1040.0 1021.2,1100.0 1000.0,1108.8 833.8,993.8 825.0,907.5 820.0,860.0" fill="none" stroke="#0a0a40" stroke-width="2.4" stroke-linejoin="round"/>
</svg>
<svg style="position:absolute;left:0;top:0;overflow:visible" width="3134" height="1972">
<polygon points="974,1733 958,1758 963,1764 969,1764 969,1815 982,1815 982,1764 988,1764 991,1758" fill="#0a0ab0"/>
<polygon points="980,1804 1002,1789 1002,1776 1035,1771 1028,1797 1014,1798 985,1818" fill="#00b418"/>
<polygon points="975,1810 1018,1830 1020,1818 1053,1843 1020,1848 1022,1838 975,1820" fill="#e01010"/>
<text x="961" y="1711" font-family="Liberation Sans" font-size="32" fill="#000">Z</text>
<text x="1042" y="1763" font-family="Liberation Sans" font-size="32" fill="#000">Y</text>
<text x="1070" y="1863" font-family="Liberation Sans" font-size="32" fill="#000">X</text>
</svg>
<svg style="position:absolute;left:0;top:0;overflow:visible" width="3134" height="1972">
<path d="M2957.8,434.9 L2963,429.6 L2974.9,426.3 L2990.8,428.3 L2997.4,433.6 L3002.7,440.2 L3006.6,456 L3008,464 L3010.6,467.3 L3017.2,469.3 L3031.7,479.8 L3038.3,491.7 L3039,504.9 L3031.7,516.8 L3022.5,523.4 L3011.9,520.8 L2976.2,503.6 L2968.3,499.6 L2960.4,497 L2957.8,491.7 Z" fill="#5cbcc6" stroke="#8095a4" stroke-width="3.5" stroke-linejoin="round"/>
<path d="M2968.3,497 L3002.7,470.6 L3011.9,467.9" stroke="#6e909c" stroke-width="2" fill="none"/>
<circle cx="3020" cy="456" r="5.5" fill="#8a7a9a"/>
<path d="M3008,466 L3015,460" stroke="#8a7a9a" stroke-width="2"/>
<path d="M2890.4,479.8 L2894.3,477.2 L2916.8,476.5 L2939.3,490.4 L2952.5,503.6 L2960.4,508.8 L2965.7,522.1 L2969.6,541.9 L2968.3,561.7 L2963,571 L2957.8,573.6 L2944.5,564.4 L2901,548.5 L2891.7,541.9 Z" fill="#0c0890" stroke="#8c8cc8" stroke-width="3.5" stroke-linejoin="round"/>
<rect x="2913.5" y="519" width="19" height="19" fill="#ee1010"/>
<path d="M2932,521 L2953,504" stroke="#b0a0e0" stroke-width="2"/>
<text x="2951" y="422" font-family="Liberation Sans" font-size="18" fill="#b8b070">Z</text>
<text x="3025" y="450" font-family="Liberation Sans" font-size="18" fill="#b8b070">Y</text>
<text x="3032" y="534" font-family="Liberation Sans" font-size="18" fill="#b8b070">X</text>
</svg>
<div style="position:absolute;left:3087px;top:1923.5px;width:20px;height:3px;background:#8a1030"></div>
</body></html>
